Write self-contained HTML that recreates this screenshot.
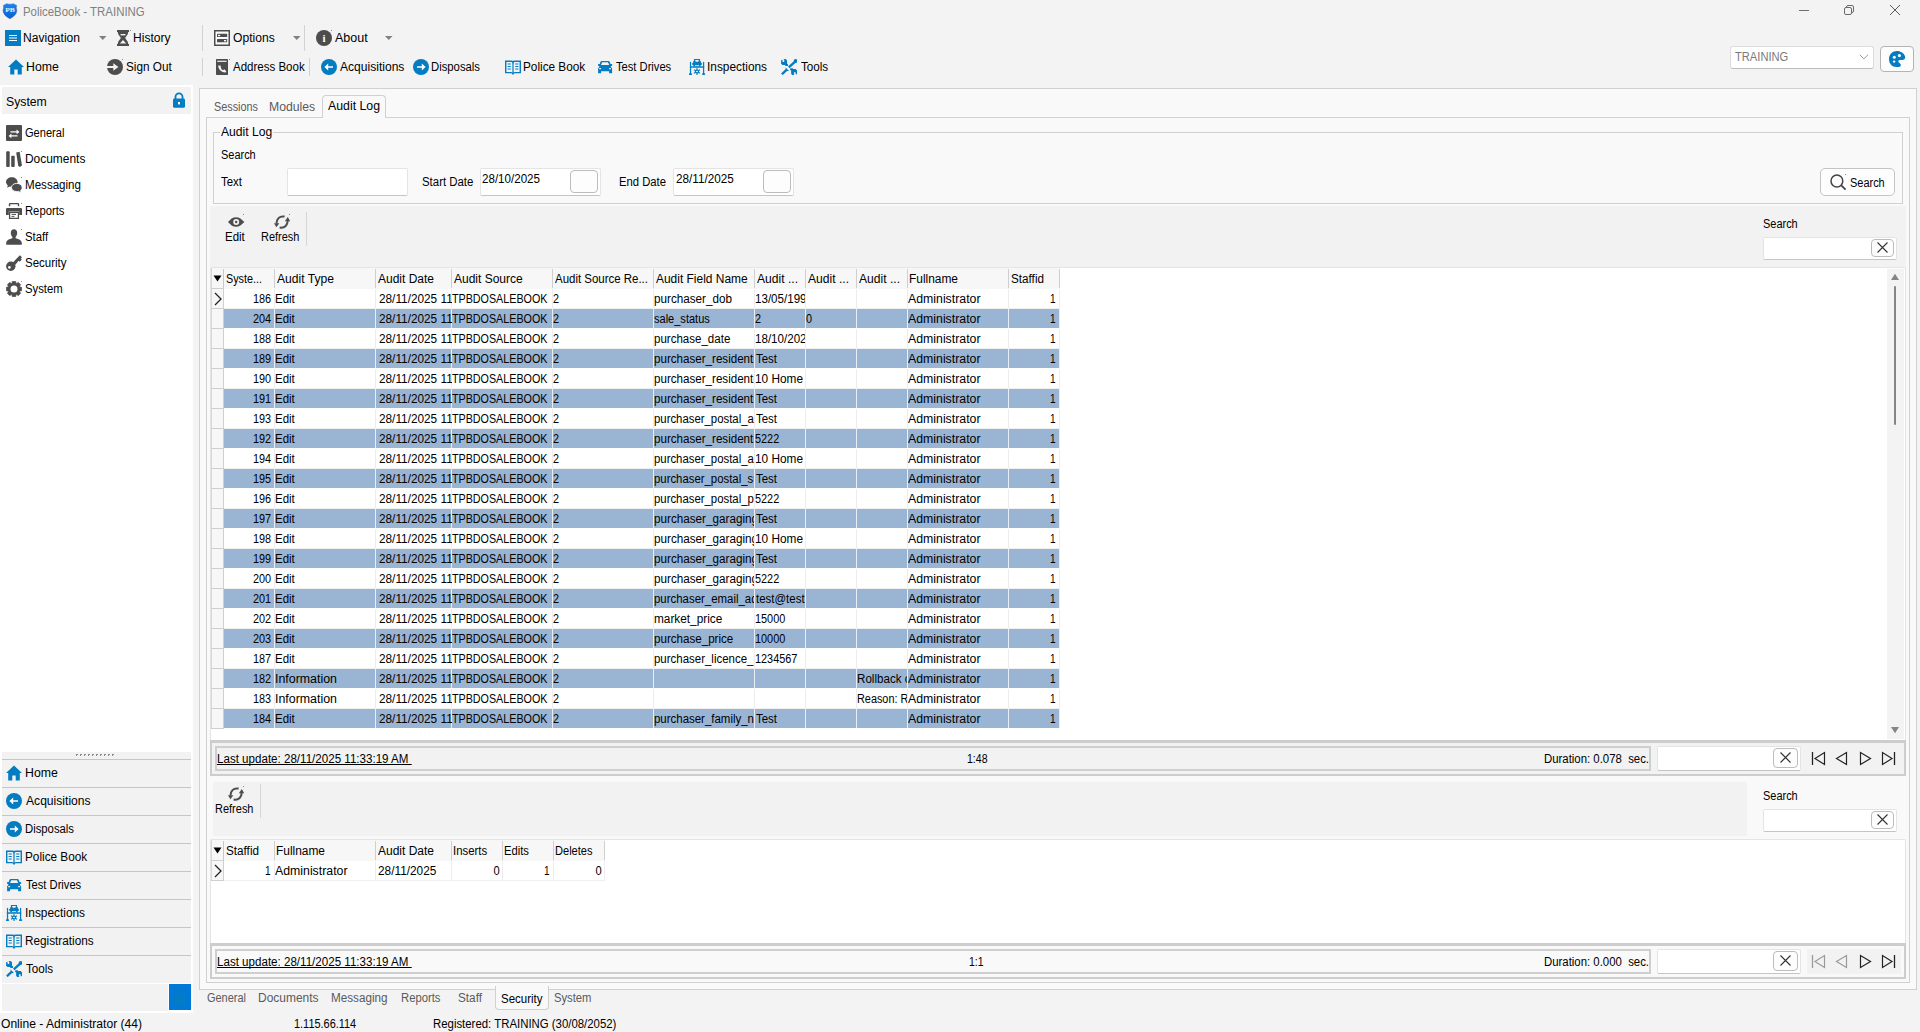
<!DOCTYPE html>
<html><head><meta charset="utf-8"><title>PoliceBook - TRAINING</title>
<style>
html,body{margin:0;padding:0;}
body{width:1920px;height:1032px;position:relative;overflow:hidden;background:#f3f3f3;font-family:'Liberation Sans', sans-serif;font-size:12px;}
div,span.t,svg{position:absolute;box-sizing:border-box;}
span.t{white-space:pre;line-height:16px;display:block;}
</style></head><body>
<span class="t" style="top:4.03px;font-size:12px;color:#808080;left:22.96px;transform-origin:0 0;transform:scaleX(0.9521);">PoliceBook - TRAINING</span>
<svg style="left:0px;top:0px" width="20" height="20" viewBox="0 0 20 20"><defs><linearGradient id="sg" x1="0" y1="0" x2="0" y2="1"><stop offset="0" stop-color="#1a86f0"/><stop offset="1" stop-color="#0a5fd0"/></linearGradient></defs><path d="M3.6 5.2Q5.2 5 6.3 3.8Q9.9 4.8 13.6 3.8Q14.8 5 16.5 5.2Q15.9 7.6 16.8 10.8Q16.4 15.6 9.8 18.8Q3.4 15.6 3 10.8Q3.9 7.6 3.6 5.2Z" fill="url(#sg)" stroke="#2a5ea8" stroke-width="0.5"/><text x="10" y="12.2" font-size="6.4" textLength="9.6" lengthAdjust="spacingAndGlyphs" font-weight="bold" fill="#e8f0ff" text-anchor="middle" font-family="Liberation Serif,serif">PB</text></svg>
<svg style="left:1799px;top:10px" width="10" height="1" viewBox="0 0 10 1"><rect width="10" height="1" fill="#6e6e6e"/></svg>
<svg style="left:1843px;top:4px" width="12" height="12" viewBox="0 0 12 12"><rect x="1.5" y="3.5" width="7" height="7" rx="1.5" fill="none" stroke="#6a6a6a" stroke-width="1"/><path d="M3.5 3.5 V3 A1.5 1.5 0 0 1 5 1.5 H9 A1.5 1.5 0 0 1 10.5 3 V7 A1.5 1.5 0 0 1 9 8.5 H8.5" fill="none" stroke="#6a6a6a" stroke-width="1"/></svg>
<svg style="left:1889px;top:4px" width="12" height="12" viewBox="0 0 12 12"><path d="M1 1 L11 11 M11 1 L1 11" stroke="#5a5a5a" stroke-width="1" fill="none"/></svg>
<svg style="left:5px;top:30px" width="16" height="16" viewBox="0 0 16 16"><rect width="16" height="16" fill="#047cc2"/><path d="M4 5.5H12M4 8H12M4 10.5H12" stroke="#fff" stroke-width="1.2"/></svg>
<span class="t" style="top:30.03px;font-size:12px;color:#000;left:23.41px;transform-origin:0 0;transform:scaleX(1.0052);">Navigation</span>
<svg style="left:98.7px;top:36px" width="8" height="4" viewBox="0 0 8 4"><path d="M0 0 H7.5 L3.75 4Z" fill="#808080"/></svg>
<svg style="left:117px;top:30px" width="12" height="16" viewBox="0 0 12 16"><path d="M0 0H12V2H11.2C11.2 5 8.8 6.4 8.2 8C8.8 9.6 11.2 11 11.2 14H12V16H0V14H0.8C0.8 11 3.2 9.6 3.8 8C3.2 6.4 0.8 5 0.8 2H0Z" fill="#4d4d4d"/><rect x="3.6" y="4" width="4.8" height="1.4" fill="#f3f3f3"/><path d="M6 10L9.2 13.6H2.8Z" fill="#f3f3f3"/></svg>
<span class="t" style="top:30.03px;font-size:12px;color:#000;left:133.41px;transform-origin:0 0;transform:scaleX(1.0042);">History</span>
<div style="left:202px;top:25px;width:1px;height:26px;background:#d2d2d2;"></div>
<svg style="left:214px;top:30px" width="16" height="16" viewBox="0 0 16 16"><rect x="0.75" y="0.75" width="14.5" height="14.5" fill="#fafafa" stroke="#4d4d4d" stroke-width="1.5"/><rect x="3" y="3.8" width="10.2" height="3.3" rx="0.6" fill="#4d4d4d"/><rect x="3" y="9" width="10.2" height="3.3" rx="0.6" fill="#4d4d4d"/><rect x="4" y="4.8" width="2.2" height="1.4" fill="#fafafa"/><rect x="10" y="10" width="2.2" height="1.4" fill="#fafafa"/></svg>
<span class="t" style="top:30.03px;font-size:12px;color:#000;left:232.73px;transform-origin:0 0;transform:scaleX(1.0082);">Options</span>
<svg style="left:292.5px;top:36px" width="8" height="4" viewBox="0 0 8 4"><path d="M0 0 H7.5 L3.75 4Z" fill="#808080"/></svg>
<div style="left:304px;top:25px;width:1px;height:26px;background:#d2d2d2;"></div>
<svg style="left:316px;top:30px" width="16" height="16" viewBox="0 0 16 16"><circle cx="8" cy="8" r="8" fill="#4d4d4d"/><text x="8" y="12" font-size="11" font-weight="bold" fill="#fff" text-anchor="middle" font-family="Liberation Serif,serif">i</text></svg>
<span class="t" style="top:30.03px;font-size:12px;color:#000;left:335.28px;transform-origin:0 0;transform:scaleX(1.0428);">About</span>
<svg style="left:385.3px;top:36px" width="8" height="4" viewBox="0 0 8 4"><path d="M0 0 H7.5 L3.75 4Z" fill="#808080"/></svg>
<svg style="left:8px;top:59px" width="16" height="16" viewBox="0 0 16 16"><path d="M8 0.5L0 8H2.2V15.5H6.3V10.5H9.7V15.5H13.8V8H16Z" fill="#047cc2"/></svg>
<span class="t" style="top:58.63px;font-size:12px;color:#000;left:26.19px;transform-origin:0 0;transform:scaleX(1.0245);">Home</span>
<svg style="left:107px;top:59px" width="16" height="16" viewBox="0 0 16 16"><circle cx="8" cy="8" r="8" fill="#4d4d4d"/><path d="M0 7H6.3V4.2L11.4 8L6.3 11.8V9H0Z" fill="#f3f3f3"/></svg>
<span class="t" style="top:58.63px;font-size:12px;color:#000;left:125.67px;transform-origin:0 0;transform:scaleX(0.9807);">Sign Out</span>
<div style="left:202px;top:58px;width:1px;height:18px;background:#d2d2d2;"></div>
<svg style="left:216px;top:59px" width="12" height="16" viewBox="0 0 12 16"><rect width="12" height="16" rx="0.8" fill="#4d4d4d"/><rect x="1.2" y="1.7" width="9.4" height="1.2" fill="#f3f3f3"/><path d="M2.2 6.4H4.6L5 9C5.4 10.2 6 10.8 7 11.2L8.4 10.2L10.4 12.6L9.6 13.4C6 13.6 2.2 10.4 2.2 6.4Z" fill="#f3f3f3"/></svg>
<span class="t" style="top:58.63px;font-size:12px;color:#000;left:233.28px;transform-origin:0 0;transform:scaleX(0.9596);">Address Book</span>
<div style="left:309px;top:58px;width:1px;height:18px;background:#d2d2d2;"></div>
<svg style="left:321px;top:59px" width="16" height="16" viewBox="0 0 16 16"><circle cx="8" cy="8" r="8" fill="#047cc2"/><path d="M12 7.2H7.2V4.6L3.4 8L7.2 11.4V8.8H12Z" fill="#fff"/></svg>
<span class="t" style="top:58.63px;font-size:12px;color:#000;left:340.28px;transform-origin:0 0;transform:scaleX(1.0058);">Acquisitions</span>
<svg style="left:413px;top:59px" width="16" height="16" viewBox="0 0 16 16"><circle cx="8" cy="8" r="8" fill="#047cc2"/><path d="M4 7.2H8.8V4.6L12.6 8L8.8 11.4V8.8H4Z" fill="#fff"/></svg>
<span class="t" style="top:58.63px;font-size:12px;color:#000;left:431.07px;transform-origin:0 0;transform:scaleX(0.9417);">Disposals</span>
<svg style="left:504.6px;top:59.5px" width="16" height="15" viewBox="0 0 16 15"><path d="M0.7 1.2H6.2Q7.6 1.2 8 2.2Q8.4 1.2 9.8 1.2H15.3V12.6H9.8Q8.6 12.6 8 13.8Q7.4 12.6 6.2 12.6H0.7Z" fill="none" stroke="#047cc2" stroke-width="1.45"/><path d="M8 2.2V13.5" stroke="#047cc2" stroke-width="1.2"/><path d="M2.6 4H5.8M2.6 6.5H5.8M2.6 9H5.8M10.2 4H13.4M10.2 6.5H13.4M10.2 9H13.4" stroke="#047cc2" stroke-width="1.2"/></svg>
<span class="t" style="top:58.63px;font-size:12px;color:#000;left:523.03px;transform-origin:0 0;transform:scaleX(0.9815);">Police Book</span>
<svg style="left:598px;top:61px" width="15" height="13" viewBox="0 0 15 13"><path d="M3.4 0H10.8Q11.3 0 11.5 0.6L11.8 1.2Q12.3 1.4 12.3 2V3.1H13.6Q14.3 3.1 14.3 4Q14.3 5 13.4 5H13L12.9 6.2Q14.1 6.4 14.1 7.4V12.2H11.1V10.3H3.1V12.2H0.1V7.4Q0.1 6.4 1.3 6.2L1.2 5H0.8Q-0.1 5 -0.1 4Q-0.1 3.1 0.6 3.1H1.9V2Q1.9 1.4 2.4 1.2L2.7 0.6Q2.9 0 3.4 0Z" fill="#047cc2"/><path d="M4.2 1.3H10L11.2 4H3Z" fill="#f3f3f3"/><rect x="1.1" y="7.05" width="2.05" height="1.25" rx="0.5" fill="#f3f3f3"/><rect x="11.05" y="7.05" width="2" height="1.25" rx="0.5" fill="#f3f3f3"/></svg>
<span class="t" style="top:58.63px;font-size:12px;color:#000;left:616.25px;transform-origin:0 0;transform:scaleX(0.9302);">Test Drives</span>
<svg style="left:689px;top:59px" width="17" height="17" viewBox="0 0 17 17"><g fill="#047cc2"><rect x="0.9" y="2.8" width="1.25" height="12.4" rx="0.6"/><rect x="13.95" y="2.8" width="1.25" height="12.4" rx="0.6"/><rect x="-0.1" y="14.2" width="3.2" height="1.8" rx="0.8"/><rect x="13" y="14.2" width="3.2" height="1.8" rx="0.8"/><rect x="0.9" y="7.3" width="14.3" height="1.45"/><path d="M5.4 -0.1H10.6Q11.1 -0.1 11.1 0.5V2.1Q12 2.2 12 3V3.8Q13 3.9 13 4.9Q13 6 12 6H11.7V7.4H4.3V6H4Q3.1 6 3.1 4.9Q3.1 3.9 4.1 3.8V3Q4.1 2.2 4.9 2.1V0.5Q4.9 -0.1 5.4 -0.1Z"/><circle cx="8" cy="12.5" r="2.1"/></g><path d="M9.30 13.25L10.60 14.00M8.00 14.00L8.00 15.50M6.70 13.25L5.40 14.00M6.70 11.75L5.40 11.00M8.00 11.00L8.00 9.50M9.30 11.75L10.60 11.00" stroke="#047cc2" stroke-width="1.2" stroke-linecap="round"/><path d="M6 1H10L9.2 2.8H6.8Z" fill="#f3f3f3"/><rect x="6" y="6.1" width="4.1" height="0.75" fill="#f3f3f3"/><ellipse cx="8" cy="12.5" rx="1" ry="0.65" fill="#f3f3f3"/></svg>
<span class="t" style="top:58.63px;font-size:12px;color:#000;left:706.91px;transform-origin:0 0;transform:scaleX(0.9884);">Inspections</span>
<svg style="left:781px;top:59px" width="16" height="16" viewBox="0 0 16 16"><path d="M0.1 1.3L1.4 0.8L1.7 2.9L3.2 2.9L3.3 0.7L2.2 0.1L4.6 0L6 1.2L6.1 4.7L7.2 5.4L6.9 7L4.5 6.9L4 6.1L1.5 6.1L0.1 4.7Z" fill="#047cc2"/><path d="M16.1 14.9L14.8 15.4L14.5 13.3L13.0 13.3L12.9 15.5L14.0 16.1L11.6 16.2L10.2 15.0L10.1 11.5L9.0 10.8L9.3 9.2L11.7 9.3L12.2 10.1L14.7 10.1L16.1 11.5Z" fill="#047cc2"/><path d="M15.2 1.6L7.8 8.4" stroke="#047cc2" stroke-width="2.3"/><circle cx="14.6" cy="2" r="1.9" fill="#047cc2"/><path d="M4.3 8.2L8 11.9L5.4 12.1Z" fill="#047cc2"/><path d="M5.8 10.6L0.9 15.3" stroke="#047cc2" stroke-width="2.3"/></svg>
<span class="t" style="top:58.63px;font-size:12px;color:#000;left:800.54px;transform-origin:0 0;transform:scaleX(0.9709);">Tools</span>
<div style="left:1730px;top:46px;width:144px;height:23px;background:#fff;border:1px solid #dcdcdc;border-radius:3px;border-bottom-color:#bdbdbd;"></div>
<span class="t" style="top:48.73px;font-size:12px;color:#7a7a7a;left:1735.25px;transform-origin:0 0;transform:scaleX(0.9295);">TRAINING</span>
<svg style="left:1859px;top:54px" width="10" height="6" viewBox="0 0 10 6"><path d="M0.8 0.8L4.9 4.9L9 0.8" fill="none" stroke="#9a9a9a" stroke-width="1"/></svg>
<div style="left:1880px;top:46px;width:34px;height:26px;background:#fdfdfd;border:1px solid #b4b4b4;border-radius:4px;"></div>
<svg style="left:1889px;top:51px" width="17" height="16" viewBox="0 0 17 16"><path d="M8 0C12 0 15 2.4 16.1 5.4C16.7 7.4 15.2 9 13.2 9H11C9.5 9 8.8 10.3 9.7 11.3L11.5 13.1C12.4 14.2 11.6 16 10 16H7.6C3 16 0 12.5 0 8C0 3.5 3.5 0 8 0Z" fill="#047cc2"/><circle cx="5.3" cy="6.3" r="1.5" fill="#fff"/><circle cx="10.4" cy="4.6" r="1.6" fill="#fff"/><circle cx="5.1" cy="10.6" r="1.2" fill="#fff"/></svg>
<div style="left:0px;top:85px;width:193px;height:928px;background:#fff;"></div>
<div style="left:2px;top:87px;width:189px;height:27px;background:#f2f2f2;"></div>
<span class="t" style="top:93.70px;font-size:13px;color:#000;left:5.64px;transform-origin:0 0;transform:scaleX(0.9413);">System</span>
<svg style="left:173px;top:92px" width="12" height="16" viewBox="0 0 12 16"><path d="M2.5 7V4.8A3.5 3.5 0 0 1 9.5 4.8V7" fill="none" stroke="#047cc2" stroke-width="1.8"/><rect x="0" y="6.6" width="12" height="9.2" rx="1.4" fill="#047cc2"/><rect x="5" y="10" width="2" height="2.4" fill="#fff"/></svg>
<svg style="left:6px;top:125px" width="16" height="16" viewBox="0 0 16 16"><rect width="16" height="16" rx="1" fill="#4d4d4d"/><path d="M4.5 6.2H10.6V4.4L13.4 6.9L10.6 9.2V7.6H4.5Z M11.5 10.2H5.4V8.6L2.6 11L5.4 13.2V11.6H11.5Z" fill="#fff"/></svg>
<span class="t" style="top:124.93px;font-size:12px;color:#000;left:25.04px;transform-origin:0 0;transform:scaleX(0.9226);">General</span>
<svg style="left:6px;top:151px" width="16" height="16" viewBox="0 0 16 16"><rect x="0.2" y="0.3" width="3.5" height="15.6" rx="0.9" fill="#4d4d4d"/><rect x="5.2" y="4.8" width="3.5" height="11.1" rx="0.9" fill="#4d4d4d"/><path d="M10.2 1.6L13.6 0.8L16 14.6L13.6 16L12.2 14.8Z" fill="#4d4d4d"/></svg>
<span class="t" style="top:150.93px;font-size:12px;color:#000;left:24.62px;transform-origin:0 0;transform:scaleX(0.9950);">Documents</span>
<svg style="left:6px;top:177px" width="16" height="16" viewBox="0 0 16 16"><path d="M5.8 0.2C9 0.2 11.6 2.3 11.6 5S9 9.8 5.8 9.8C5 9.8 4.4 9.7 3.7 9.5L1 10.8L1.9 8.4C0.8 7.5 0 6.3 0 5C0 2.3 2.6 0.2 5.8 0.2Z" fill="#4d4d4d"/><path d="M10.8 6.4C13.8 6.4 16.2 8.2 16.2 10.5C16.2 11.7 15.6 12.7 14.6 13.5L15.2 16L12.6 14.4C12 14.6 11.4 14.6 10.8 14.6C7.8 14.6 5.4 12.8 5.4 10.5S7.8 6.4 10.8 6.4Z" fill="#4d4d4d" stroke="#fff" stroke-width="0.9"/></svg>
<span class="t" style="top:176.93px;font-size:12px;color:#000;left:24.65px;transform-origin:0 0;transform:scaleX(0.9650);">Messaging</span>
<svg style="left:6px;top:203px" width="16" height="16" viewBox="0 0 16 16"><path d="M3.5 3.2V1.5A1 1 0 0 1 4.5 0.5H11.5A1 1 0 0 1 12.5 1.5V3.2" fill="none" stroke="#4d4d4d" stroke-width="1.4"/><path d="M1.2 5H14.8A1.2 1.2 0 0 1 16 6.2V12H13.2V8.6H2.8V12H0V6.2A1.2 1.2 0 0 1 1.2 5Z" fill="#4d4d4d"/><rect x="3.6" y="9.4" width="8.8" height="6" fill="none" stroke="#4d4d4d" stroke-width="1.3"/><path d="M5.6 11.4H10M5.6 13.4H8.4" stroke="#4d4d4d" stroke-width="1"/></svg>
<span class="t" style="top:202.93px;font-size:12px;color:#000;left:24.68px;transform-origin:0 0;transform:scaleX(0.9374);">Reports</span>
<svg style="left:6px;top:229px" width="16" height="16" viewBox="0 0 16 16"><path d="M8 0.3C10 0.3 11.2 1.8 11.2 4C11.2 5.8 10.4 7.2 9.6 8V9.2C12.5 10 15.8 11 15.8 14V15.7H0.2V14C0.2 11 3.5 10 6.4 9.2V8C5.6 7.2 4.8 5.8 4.8 4C4.8 1.8 6 0.3 8 0.3Z" fill="#4d4d4d"/></svg>
<span class="t" style="top:228.93px;font-size:12px;color:#000;left:25.08px;transform-origin:0 0;transform:scaleX(0.9481);">Staff</span>
<svg style="left:6px;top:255px" width="16" height="16" viewBox="0 0 16 16"><circle cx="4.8" cy="11.2" r="4.7" fill="#4d4d4d"/><circle cx="3.4" cy="12.4" r="1.3" fill="#fff"/><path d="M6.2 8.2L13.8 0.2L16 2.2L14.8 3.6L15.8 4.6L13.8 6.8L12.6 5.8L9.4 9.8Z" fill="#4d4d4d"/></svg>
<span class="t" style="top:254.93px;font-size:12px;color:#000;left:25.08px;transform-origin:0 0;transform:scaleX(0.9571);">Security</span>
<svg style="left:6px;top:281px" width="16" height="16" viewBox="0 0 16 16"><path d="M6.34 0.28L9.66 0.28L9.95 2.01L10.86 2.39L12.29 1.36L14.64 3.71L13.61 5.14L13.99 6.05L15.72 6.34L15.72 9.66L13.99 9.95L13.61 10.86L14.64 12.29L12.29 14.64L10.86 13.61L9.95 13.99L9.66 15.72L6.34 15.72L6.05 13.99L5.14 13.61L3.71 14.64L1.36 12.29L2.39 10.86L2.01 9.95L0.28 9.66L0.28 6.34L2.01 6.05L2.39 5.14L1.36 3.71L3.71 1.36L5.14 2.39L6.05 2.01Z" fill="#4d4d4d" stroke="#4d4d4d" stroke-width="0.6" stroke-linejoin="round"/><circle cx="8" cy="8" r="3.5" fill="#fff"/></svg>
<span class="t" style="top:280.93px;font-size:12px;color:#000;left:25.09px;transform-origin:0 0;transform:scaleX(0.9421);">System</span>
<div style="left:2px;top:752px;width:189px;height:231px;background:#f2f2f2;"></div>
<div style="left:76px;top:754px;width:2px;height:1px;background:#8a8a8a;"></div>
<div style="left:76px;top:755px;width:1px;height:1px;background:#8a8a8a;"></div>
<div style="left:80px;top:754px;width:2px;height:1px;background:#8a8a8a;"></div>
<div style="left:80px;top:755px;width:1px;height:1px;background:#8a8a8a;"></div>
<div style="left:84px;top:754px;width:2px;height:1px;background:#8a8a8a;"></div>
<div style="left:84px;top:755px;width:1px;height:1px;background:#8a8a8a;"></div>
<div style="left:88px;top:754px;width:2px;height:1px;background:#8a8a8a;"></div>
<div style="left:88px;top:755px;width:1px;height:1px;background:#8a8a8a;"></div>
<div style="left:92px;top:754px;width:2px;height:1px;background:#8a8a8a;"></div>
<div style="left:92px;top:755px;width:1px;height:1px;background:#8a8a8a;"></div>
<div style="left:96px;top:754px;width:2px;height:1px;background:#8a8a8a;"></div>
<div style="left:96px;top:755px;width:1px;height:1px;background:#8a8a8a;"></div>
<div style="left:100px;top:754px;width:2px;height:1px;background:#8a8a8a;"></div>
<div style="left:100px;top:755px;width:1px;height:1px;background:#8a8a8a;"></div>
<div style="left:104px;top:754px;width:2px;height:1px;background:#8a8a8a;"></div>
<div style="left:104px;top:755px;width:1px;height:1px;background:#8a8a8a;"></div>
<div style="left:108px;top:754px;width:2px;height:1px;background:#8a8a8a;"></div>
<div style="left:108px;top:755px;width:1px;height:1px;background:#8a8a8a;"></div>
<div style="left:112px;top:754px;width:2px;height:1px;background:#8a8a8a;"></div>
<div style="left:112px;top:755px;width:1px;height:1px;background:#8a8a8a;"></div>
<div style="left:2px;top:759px;width:189px;height:1px;background:#c6c6c6;"></div>
<svg style="left:6px;top:765px" width="16" height="16" viewBox="0 0 16 16"><path d="M8 0.5L0 8H2.2V15.5H6.3V10.5H9.7V15.5H13.8V8H16Z" fill="#047cc2"/></svg>
<span class="t" style="top:764.53px;font-size:12px;color:#000;left:25.19px;transform-origin:0 0;transform:scaleX(1.0245);">Home</span>
<div style="left:2px;top:787px;width:189px;height:1px;background:#c6c6c6;"></div>
<svg style="left:6px;top:793px" width="16" height="16" viewBox="0 0 16 16"><circle cx="8" cy="8" r="8" fill="#047cc2"/><path d="M12 7.2H7.2V4.6L3.4 8L7.2 11.4V8.8H12Z" fill="#fff"/></svg>
<span class="t" style="top:792.53px;font-size:12px;color:#000;left:26.18px;transform-origin:0 0;transform:scaleX(1.0089);">Acquisitions</span>
<div style="left:2px;top:815px;width:189px;height:1px;background:#c6c6c6;"></div>
<svg style="left:6px;top:821px" width="16" height="16" viewBox="0 0 16 16"><circle cx="8" cy="8" r="8" fill="#047cc2"/><path d="M4 7.2H8.8V4.6L12.6 8L8.8 11.4V8.8H4Z" fill="#fff"/></svg>
<span class="t" style="top:820.53px;font-size:12px;color:#000;left:25.27px;transform-origin:0 0;transform:scaleX(0.9417);">Disposals</span>
<div style="left:2px;top:843px;width:189px;height:1px;background:#c6c6c6;"></div>
<svg style="left:6px;top:850px" width="16" height="15" viewBox="0 0 16 15"><path d="M0.7 1.2H6.2Q7.6 1.2 8 2.2Q8.4 1.2 9.8 1.2H15.3V12.6H9.8Q8.6 12.6 8 13.8Q7.4 12.6 6.2 12.6H0.7Z" fill="none" stroke="#047cc2" stroke-width="1.45"/><path d="M8 2.2V13.5" stroke="#047cc2" stroke-width="1.2"/><path d="M2.6 4H5.8M2.6 6.5H5.8M2.6 9H5.8M10.2 4H13.4M10.2 6.5H13.4M10.2 9H13.4" stroke="#047cc2" stroke-width="1.2"/></svg>
<span class="t" style="top:848.53px;font-size:12px;color:#000;left:25.23px;transform-origin:0 0;transform:scaleX(0.9815);">Police Book</span>
<div style="left:2px;top:871px;width:189px;height:1px;background:#c6c6c6;"></div>
<svg style="left:7px;top:879px" width="15" height="13" viewBox="0 0 15 13"><path d="M3.4 0H10.8Q11.3 0 11.5 0.6L11.8 1.2Q12.3 1.4 12.3 2V3.1H13.6Q14.3 3.1 14.3 4Q14.3 5 13.4 5H13L12.9 6.2Q14.1 6.4 14.1 7.4V12.2H11.1V10.3H3.1V12.2H0.1V7.4Q0.1 6.4 1.3 6.2L1.2 5H0.8Q-0.1 5 -0.1 4Q-0.1 3.1 0.6 3.1H1.9V2Q1.9 1.4 2.4 1.2L2.7 0.6Q2.9 0 3.4 0Z" fill="#047cc2"/><path d="M4.2 1.3H10L11.2 4H3Z" fill="#f3f3f3"/><rect x="1.1" y="7.05" width="2.05" height="1.25" rx="0.5" fill="#f3f3f3"/><rect x="11.05" y="7.05" width="2" height="1.25" rx="0.5" fill="#f3f3f3"/></svg>
<span class="t" style="top:876.53px;font-size:12px;color:#000;left:25.95px;transform-origin:0 0;transform:scaleX(0.9302);">Test Drives</span>
<div style="left:2px;top:899px;width:189px;height:1px;background:#c6c6c6;"></div>
<svg style="left:6px;top:905px" width="17" height="17" viewBox="0 0 17 17"><g fill="#047cc2"><rect x="0.9" y="2.8" width="1.25" height="12.4" rx="0.6"/><rect x="13.95" y="2.8" width="1.25" height="12.4" rx="0.6"/><rect x="-0.1" y="14.2" width="3.2" height="1.8" rx="0.8"/><rect x="13" y="14.2" width="3.2" height="1.8" rx="0.8"/><rect x="0.9" y="7.3" width="14.3" height="1.45"/><path d="M5.4 -0.1H10.6Q11.1 -0.1 11.1 0.5V2.1Q12 2.2 12 3V3.8Q13 3.9 13 4.9Q13 6 12 6H11.7V7.4H4.3V6H4Q3.1 6 3.1 4.9Q3.1 3.9 4.1 3.8V3Q4.1 2.2 4.9 2.1V0.5Q4.9 -0.1 5.4 -0.1Z"/><circle cx="8" cy="12.5" r="2.1"/></g><path d="M9.30 13.25L10.60 14.00M8.00 14.00L8.00 15.50M6.70 13.25L5.40 14.00M6.70 11.75L5.40 11.00M8.00 11.00L8.00 9.50M9.30 11.75L10.60 11.00" stroke="#047cc2" stroke-width="1.2" stroke-linecap="round"/><path d="M6 1H10L9.2 2.8H6.8Z" fill="#f3f3f3"/><rect x="6" y="6.1" width="4.1" height="0.75" fill="#f3f3f3"/><ellipse cx="8" cy="12.5" rx="1" ry="0.65" fill="#f3f3f3"/></svg>
<span class="t" style="top:904.53px;font-size:12px;color:#000;left:25.11px;transform-origin:0 0;transform:scaleX(0.9884);">Inspections</span>
<div style="left:2px;top:927px;width:189px;height:1px;background:#c6c6c6;"></div>
<svg style="left:6px;top:934px" width="16" height="15" viewBox="0 0 16 15"><path d="M0.7 1.2H6.2Q7.6 1.2 8 2.2Q8.4 1.2 9.8 1.2H15.3V12.6H9.8Q8.6 12.6 8 13.8Q7.4 12.6 6.2 12.6H0.7Z" fill="none" stroke="#047cc2" stroke-width="1.45"/><path d="M8 2.2V13.5" stroke="#047cc2" stroke-width="1.2"/><path d="M2.6 4H5.8M2.6 6.5H5.8M2.6 9H5.8M10.2 4H13.4M10.2 6.5H13.4M10.2 9H13.4" stroke="#047cc2" stroke-width="1.2"/></svg>
<span class="t" style="top:932.53px;font-size:12px;color:#000;left:25.24px;transform-origin:0 0;transform:scaleX(0.9796);">Registrations</span>
<div style="left:2px;top:955px;width:189px;height:1px;background:#c6c6c6;"></div>
<svg style="left:6px;top:961px" width="16" height="16" viewBox="0 0 16 16"><path d="M0.1 1.3L1.4 0.8L1.7 2.9L3.2 2.9L3.3 0.7L2.2 0.1L4.6 0L6 1.2L6.1 4.7L7.2 5.4L6.9 7L4.5 6.9L4 6.1L1.5 6.1L0.1 4.7Z" fill="#047cc2"/><path d="M16.1 14.9L14.8 15.4L14.5 13.3L13.0 13.3L12.9 15.5L14.0 16.1L11.6 16.2L10.2 15.0L10.1 11.5L9.0 10.8L9.3 9.2L11.7 9.3L12.2 10.1L14.7 10.1L16.1 11.5Z" fill="#047cc2"/><path d="M15.2 1.6L7.8 8.4" stroke="#047cc2" stroke-width="2.3"/><circle cx="14.6" cy="2" r="1.9" fill="#047cc2"/><path d="M4.3 8.2L8 11.9L5.4 12.1Z" fill="#047cc2"/><path d="M5.8 10.6L0.9 15.3" stroke="#047cc2" stroke-width="2.3"/></svg>
<span class="t" style="top:960.53px;font-size:12px;color:#000;left:25.94px;transform-origin:0 0;transform:scaleX(0.9709);">Tools</span>
<div style="left:2px;top:984px;width:166px;height:27px;background:#f2f2f2;"></div>
<div style="left:169px;top:984px;width:22px;height:26px;background:#0078d7;"></div>
<svg style="left:174px;top:989px" width="12" height="16" viewBox="0 0 12 16"><path d="M2.5 7V4.8A3.5 3.5 0 0 1 9.5 4.8V7" fill="none" stroke="#047cc2" stroke-width="1.8"/><rect x="0" y="6.6" width="12" height="9.2" rx="1.4" fill="#047cc2"/><rect x="5" y="10" width="2" height="2.2" fill="#0078d7"/></svg>
<div style="left:199px;top:88px;width:1718px;height:902px;background:#f9f9f9;border:1px solid #d0d0d0;"></div>
<span class="t" style="top:98.63px;font-size:12px;color:#5a5a5a;left:213.51px;transform-origin:0 0;transform:scaleX(0.9034);">Sessions</span>
<span class="t" style="top:98.63px;font-size:12px;color:#5a5a5a;left:269.00px;transform-origin:0 0;transform:scaleX(1.0185);">Modules</span>
<div style="left:206px;top:117px;width:1704px;height:866px;background:#f9f9f9;border:1px solid #d0d0d0;"></div>
<div style="left:322px;top:95px;width:64px;height:23px;background:#f9f9f9;border:1px solid #d0d0d0;border-bottom:none;border-radius:4px 4px 0 0;"></div>
<span class="t" style="top:98.03px;font-size:12px;color:#000;left:327.98px;transform-origin:0 0;transform:scaleX(1.0253);">Audit Log</span>
<div style="left:213px;top:132px;width:1690px;height:72px;border:1px solid #d0d0d0;"></div>
<div style="left:220px;top:127px;width:53px;height:10px;background:#f9f9f9;"></div>
<span class="t" style="top:123.63px;font-size:12px;color:#000;left:221.18px;transform-origin:0 0;transform:scaleX(1.0115);">Audit Log</span>
<span class="t" style="top:146.78px;font-size:12px;color:#000;left:220.50px;transform-origin:0 0;transform:scaleX(0.9124);">Search</span>
<span class="t" style="top:174.03px;font-size:12px;color:#000;left:220.74px;transform-origin:0 0;transform:scaleX(0.9539);">Text</span>
<div style="left:287px;top:168px;width:121px;height:28px;background:#fff;border:1px solid #e4e4e4;border-radius:2px;border-bottom-color:#c4c4c4;"></div>
<span class="t" style="top:174.03px;font-size:12px;color:#000;left:422.48px;transform-origin:0 0;transform:scaleX(0.9513);">Start Date</span>
<div style="left:480px;top:168px;width:121px;height:28px;background:#fff;border:1px solid #e4e4e4;border-radius:2px;border-bottom-color:#c4c4c4;"></div>
<span class="t" style="top:170.93px;font-size:12px;color:#000;left:482.42px;transform-origin:0 0;transform:scaleX(0.9657);">28/10/2025</span>
<div style="left:570px;top:170px;width:28px;height:23px;background:#fdfdfd;border:1px solid #bcbcbc;border-radius:4px;"></div>
<span class="t" style="top:174.03px;font-size:12px;color:#000;left:619.28px;transform-origin:0 0;transform:scaleX(0.9391);">End Date</span>
<div style="left:673px;top:168px;width:121px;height:28px;background:#fff;border:1px solid #e4e4e4;border-radius:2px;border-bottom-color:#c4c4c4;"></div>
<span class="t" style="top:170.93px;font-size:12px;color:#000;left:675.61px;transform-origin:0 0;transform:scaleX(0.9768);">28/11/2025</span>
<div style="left:763px;top:170px;width:28px;height:23px;background:#fdfdfd;border:1px solid #bcbcbc;border-radius:4px;"></div>
<div style="left:1820px;top:168px;width:75px;height:28px;background:#fdfdfd;border:1px solid #c4c4c4;border-radius:5px;"></div>
<svg style="left:1829px;top:173px" width="18" height="18" viewBox="0 0 18 18"><circle cx="7.9" cy="8" r="5.9" fill="none" stroke="#444" stroke-width="1.5"/><path d="M12.2 12.3L16.6 16.7" stroke="#444" stroke-width="1.8"/></svg>
<span class="t" style="top:175.03px;font-size:12px;color:#000;left:1849.50px;transform-origin:0 0;transform:scaleX(0.9124);">Search</span>
<div style="left:210px;top:206px;width:1696px;height:62px;background:#f2f2f2;"></div>
<svg style="left:227.7px;top:217px" width="17" height="10" viewBox="0 0 17 10"><path d="M0 5L3.6 1.4Q8 -1 12.4 1.4L16.4 5L12.4 8.6Q8 11 3.6 8.6Z" fill="#4d4d4d"/><circle cx="8.2" cy="5" r="3" fill="#f2f2f2"/><circle cx="8.2" cy="5" r="1.2" fill="#4d4d4d"/></svg>
<span class="t" style="top:228.63px;font-size:12px;color:#000;left:225.26px;transform-origin:0 0;transform:scaleX(0.9571);">Edit</span>
<svg style="left:274px;top:214.8px" width="17" height="14" viewBox="0 0 17 14"><path d="M10.6 1.6C5.2 0.6 2.4 4.4 2.6 8.6" fill="none" stroke="#4d4d4d" stroke-width="2"/><path d="M0 8.2H5.4L2.4 12.2Z" fill="#4d4d4d"/><path d="M5.6 12.6C11 13.6 13.8 9.8 13.6 5.6" fill="none" stroke="#4d4d4d" stroke-width="2"/><path d="M10.8 6.2H16.2L13.8 2Z" fill="#4d4d4d"/></svg>
<span class="t" style="top:228.63px;font-size:12px;color:#000;left:261.30px;transform-origin:0 0;transform:scaleX(0.9136);">Refresh</span>
<div style="left:306px;top:212px;width:1px;height:34px;background:#d6d6d6;"></div>
<span class="t" style="top:215.78px;font-size:12px;color:#000;left:1762.50px;transform-origin:0 0;transform:scaleX(0.9124);">Search</span>
<div style="left:1763px;top:237px;width:134px;height:23px;background:#fff;border:1px solid #e4e4e4;border-radius:2px;border-bottom-color:#c4c4c4;"></div>
<div style="left:1871px;top:239px;width:23px;height:18px;background:#fdfdfd;border:1px solid #bcbcbc;border-radius:4px;"></div>
<svg style="left:1877.2px;top:242px" width="11" height="11" viewBox="0 0 11 11"><path d="M0.5 0.5L10.5 10.5M10.5 0.5L0.5 10.5" stroke="#333" stroke-width="1.1" fill="none"/></svg>
<div style="left:210px;top:267px;width:1696px;height:473px;background:#fff;border:1px solid #e4e4e4;border-bottom:none;border-radius:2px 2px 0 0;"></div>
<div style="left:211px;top:268px;width:849px;height:21px;background:#f7f7f7;"></div>
<div style="left:211px;top:268px;width:13px;height:461px;background:#f7f7f7;"></div>
<div style="left:211px;top:268px;width:1px;height:461px;background:#d8d8d8;"></div>
<svg style="left:213px;top:275px" width="9" height="7" viewBox="0 0 9 7"><path d="M0.5 0.5H8.5L4.5 6.5Z" fill="#000"/></svg>
<div style="left:223px;top:269px;width:1px;height:19px;background:#c8c8c8;"></div>
<div style="left:211px;top:288px;width:13px;height:1px;background:#cfcfcf;"></div>
<span class="t" style="top:270.78px;font-size:12px;color:#000;left:225.71px;transform-origin:0 0;transform:scaleX(0.8996);">Syste...</span>
<div style="left:274px;top:269px;width:1px;height:19px;background:#cfcfcf;"></div>
<span class="t" style="top:270.78px;font-size:12px;color:#000;left:277.18px;transform-origin:0 0;transform:scaleX(1.0091);">Audit Type</span>
<div style="left:375px;top:269px;width:1px;height:19px;background:#cfcfcf;"></div>
<span class="t" style="top:270.78px;font-size:12px;color:#000;left:378.18px;transform-origin:0 0;transform:scaleX(0.9992);">Audit Date</span>
<div style="left:451px;top:269px;width:1px;height:19px;background:#cfcfcf;"></div>
<span class="t" style="top:270.78px;font-size:12px;color:#000;left:454.18px;transform-origin:0 0;transform:scaleX(0.9997);">Audit Source</span>
<div style="left:552px;top:269px;width:1px;height:19px;background:#cfcfcf;"></div>
<span class="t" style="top:270.78px;font-size:12px;color:#000;left:555.18px;transform-origin:0 0;transform:scaleX(0.9549);">Audit Source Re...</span>
<div style="left:653px;top:269px;width:1px;height:19px;background:#cfcfcf;"></div>
<span class="t" style="top:270.78px;font-size:12px;color:#000;left:656.18px;transform-origin:0 0;transform:scaleX(0.9962);">Audit Field Name</span>
<div style="left:754px;top:269px;width:1px;height:19px;background:#cfcfcf;"></div>
<span class="t" style="top:270.78px;font-size:12px;color:#000;left:757.18px;transform-origin:0 0;transform:scaleX(1.0077);">Audit ...</span>
<div style="left:805px;top:269px;width:1px;height:19px;background:#cfcfcf;"></div>
<span class="t" style="top:270.78px;font-size:12px;color:#000;left:808.18px;transform-origin:0 0;transform:scaleX(1.0077);">Audit ...</span>
<div style="left:856px;top:269px;width:1px;height:19px;background:#cfcfcf;"></div>
<span class="t" style="top:270.78px;font-size:12px;color:#000;left:859.18px;transform-origin:0 0;transform:scaleX(1.0077);">Audit ...</span>
<div style="left:907px;top:269px;width:1px;height:19px;background:#cfcfcf;"></div>
<span class="t" style="top:270.78px;font-size:12px;color:#000;left:909.22px;transform-origin:0 0;transform:scaleX(0.9927);">Fullname</span>
<div style="left:1008px;top:269px;width:1px;height:19px;background:#cfcfcf;"></div>
<span class="t" style="top:270.78px;font-size:12px;color:#000;left:1010.67px;transform-origin:0 0;transform:scaleX(0.9760);">Staffid</span>
<div style="left:1059px;top:269px;width:1px;height:19px;background:#cfcfcf;"></div>
<div style="left:274px;top:289px;width:1px;height:19px;background:#ededed;"></div>
<div style="left:375px;top:289px;width:1px;height:19px;background:#ededed;"></div>
<div style="left:451px;top:289px;width:1px;height:19px;background:#ededed;"></div>
<div style="left:552px;top:289px;width:1px;height:19px;background:#ededed;"></div>
<div style="left:653px;top:289px;width:1px;height:19px;background:#ededed;"></div>
<div style="left:754px;top:289px;width:1px;height:19px;background:#ededed;"></div>
<div style="left:805px;top:289px;width:1px;height:19px;background:#ededed;"></div>
<div style="left:856px;top:289px;width:1px;height:19px;background:#ededed;"></div>
<div style="left:907px;top:289px;width:1px;height:19px;background:#ededed;"></div>
<div style="left:1008px;top:289px;width:1px;height:19px;background:#ededed;"></div>
<div style="left:1059px;top:289px;width:1px;height:19px;background:#ededed;"></div>
<div style="left:224px;top:308px;width:836px;height:1px;background:#efefef;"></div>
<div style="left:211px;top:308px;width:13px;height:1px;background:#cfcfcf;"></div>
<div style="left:223px;top:289px;width:1px;height:20px;background:#cfcfcf;"></div>
<span class="t" style="top:290.78px;font-size:12px;color:#000;right:1648.72px;transform-origin:100% 0;transform:scaleX(0.9061);">186</span>
<span class="t" style="top:290.78px;font-size:12px;color:#000;left:274.86px;transform-origin:0 0;transform:scaleX(0.9571);">Edit</span>
<div style="left:379.01px;top:290.78px;width:72.99px;height:16px;overflow:hidden"><span class="t" style="left:0;top:0;font-size:12px;color:#000;transform-origin:0 0;transform:scaleX(0.9831)">28/11/2025 11:33:19 AM</span></div>
<span class="t" style="top:290.78px;font-size:12px;color:#000;left:452.36px;transform-origin:0 0;transform:scaleX(0.8941);">TPBDOSALEBOOK</span>
<span class="t" style="top:290.78px;font-size:12px;color:#000;left:552.95px;transform-origin:0 0;transform:scaleX(0.9047);">2</span>
<div style="left:653.95px;top:290.78px;width:99.95px;height:16px;overflow:hidden"><span class="t" style="left:0;top:0;font-size:12px;color:#000;transform-origin:0 0;transform:scaleX(0.9742)">purchaser_dob</span></div>
<div style="left:754.92px;top:290.78px;width:49.98px;height:16px;overflow:hidden"><span class="t" style="left:0;top:0;font-size:12px;color:#000;transform-origin:0 0;transform:scaleX(0.9657)">13/05/1990</span></div>
<span class="t" style="top:290.78px;font-size:12px;color:#000;left:908.18px;transform-origin:0 0;transform:scaleX(1.0256);">Administrator</span>
<span class="t" style="top:290.78px;font-size:12px;color:#000;right:864.01px;transform-origin:100% 0;transform:scaleX(0.8374);">1</span>
<div style="left:224px;top:309px;width:836px;height:19px;background:#9ab4d3;"></div>
<div style="left:274px;top:309px;width:1px;height:19px;background:#e6edf5;"></div>
<div style="left:375px;top:309px;width:1px;height:19px;background:#e6edf5;"></div>
<div style="left:451px;top:309px;width:1px;height:19px;background:#e6edf5;"></div>
<div style="left:552px;top:309px;width:1px;height:19px;background:#e6edf5;"></div>
<div style="left:653px;top:309px;width:1px;height:19px;background:#e6edf5;"></div>
<div style="left:754px;top:309px;width:1px;height:19px;background:#e6edf5;"></div>
<div style="left:805px;top:309px;width:1px;height:19px;background:#e6edf5;"></div>
<div style="left:856px;top:309px;width:1px;height:19px;background:#e6edf5;"></div>
<div style="left:907px;top:309px;width:1px;height:19px;background:#e6edf5;"></div>
<div style="left:1008px;top:309px;width:1px;height:19px;background:#e6edf5;"></div>
<div style="left:1059px;top:309px;width:1px;height:19px;background:#e6edf5;"></div>
<div style="left:211px;top:328px;width:13px;height:1px;background:#cfcfcf;"></div>
<div style="left:223px;top:309px;width:1px;height:20px;background:#cfcfcf;"></div>
<span class="t" style="top:310.78px;font-size:12px;color:#000;right:1648.88px;transform-origin:100% 0;transform:scaleX(0.9061);">204</span>
<span class="t" style="top:310.78px;font-size:12px;color:#000;left:274.86px;transform-origin:0 0;transform:scaleX(0.9571);">Edit</span>
<div style="left:379.01px;top:310.78px;width:72.99px;height:16px;overflow:hidden"><span class="t" style="left:0;top:0;font-size:12px;color:#000;transform-origin:0 0;transform:scaleX(0.9831)">28/11/2025 11:33:19 AM</span></div>
<span class="t" style="top:310.78px;font-size:12px;color:#000;left:452.36px;transform-origin:0 0;transform:scaleX(0.8941);">TPBDOSALEBOOK</span>
<span class="t" style="top:310.78px;font-size:12px;color:#000;left:552.95px;transform-origin:0 0;transform:scaleX(0.9047);">2</span>
<div style="left:654.39px;top:310.78px;width:99.51px;height:16px;overflow:hidden"><span class="t" style="left:0;top:0;font-size:12px;color:#000;transform-origin:0 0;transform:scaleX(0.9192)">sale_status</span></div>
<div style="left:755.25px;top:310.78px;width:49.65px;height:16px;overflow:hidden"><span class="t" style="left:0;top:0;font-size:12px;color:#000;transform-origin:0 0;transform:scaleX(0.9047)">2</span></div>
<div style="left:806.38px;top:310.78px;width:49.52px;height:16px;overflow:hidden"><span class="t" style="left:0;top:0;font-size:12px;color:#000;transform-origin:0 0;transform:scaleX(0.9047)">0</span></div>
<span class="t" style="top:310.78px;font-size:12px;color:#000;left:908.18px;transform-origin:0 0;transform:scaleX(1.0256);">Administrator</span>
<span class="t" style="top:310.78px;font-size:12px;color:#000;right:864.01px;transform-origin:100% 0;transform:scaleX(0.8374);">1</span>
<div style="left:274px;top:329px;width:1px;height:19px;background:#ededed;"></div>
<div style="left:375px;top:329px;width:1px;height:19px;background:#ededed;"></div>
<div style="left:451px;top:329px;width:1px;height:19px;background:#ededed;"></div>
<div style="left:552px;top:329px;width:1px;height:19px;background:#ededed;"></div>
<div style="left:653px;top:329px;width:1px;height:19px;background:#ededed;"></div>
<div style="left:754px;top:329px;width:1px;height:19px;background:#ededed;"></div>
<div style="left:805px;top:329px;width:1px;height:19px;background:#ededed;"></div>
<div style="left:856px;top:329px;width:1px;height:19px;background:#ededed;"></div>
<div style="left:907px;top:329px;width:1px;height:19px;background:#ededed;"></div>
<div style="left:1008px;top:329px;width:1px;height:19px;background:#ededed;"></div>
<div style="left:1059px;top:329px;width:1px;height:19px;background:#ededed;"></div>
<div style="left:224px;top:348px;width:836px;height:1px;background:#efefef;"></div>
<div style="left:211px;top:348px;width:13px;height:1px;background:#cfcfcf;"></div>
<div style="left:223px;top:329px;width:1px;height:20px;background:#cfcfcf;"></div>
<span class="t" style="top:330.78px;font-size:12px;color:#000;right:1648.73px;transform-origin:100% 0;transform:scaleX(0.9061);">188</span>
<span class="t" style="top:330.78px;font-size:12px;color:#000;left:274.86px;transform-origin:0 0;transform:scaleX(0.9571);">Edit</span>
<div style="left:379.01px;top:330.78px;width:72.99px;height:16px;overflow:hidden"><span class="t" style="left:0;top:0;font-size:12px;color:#000;transform-origin:0 0;transform:scaleX(0.9831)">28/11/2025 11:33:19 AM</span></div>
<span class="t" style="top:330.78px;font-size:12px;color:#000;left:452.36px;transform-origin:0 0;transform:scaleX(0.8941);">TPBDOSALEBOOK</span>
<span class="t" style="top:330.78px;font-size:12px;color:#000;left:552.95px;transform-origin:0 0;transform:scaleX(0.9047);">2</span>
<div style="left:653.96px;top:330.78px;width:99.94px;height:16px;overflow:hidden"><span class="t" style="left:0;top:0;font-size:12px;color:#000;transform-origin:0 0;transform:scaleX(0.9609)">purchase_date</span></div>
<div style="left:754.92px;top:330.78px;width:49.98px;height:16px;overflow:hidden"><span class="t" style="left:0;top:0;font-size:12px;color:#000;transform-origin:0 0;transform:scaleX(0.9657)">18/10/2025</span></div>
<span class="t" style="top:330.78px;font-size:12px;color:#000;left:908.18px;transform-origin:0 0;transform:scaleX(1.0256);">Administrator</span>
<span class="t" style="top:330.78px;font-size:12px;color:#000;right:864.01px;transform-origin:100% 0;transform:scaleX(0.8374);">1</span>
<div style="left:224px;top:349px;width:836px;height:19px;background:#9ab4d3;"></div>
<div style="left:274px;top:349px;width:1px;height:19px;background:#e6edf5;"></div>
<div style="left:375px;top:349px;width:1px;height:19px;background:#e6edf5;"></div>
<div style="left:451px;top:349px;width:1px;height:19px;background:#e6edf5;"></div>
<div style="left:552px;top:349px;width:1px;height:19px;background:#e6edf5;"></div>
<div style="left:653px;top:349px;width:1px;height:19px;background:#e6edf5;"></div>
<div style="left:754px;top:349px;width:1px;height:19px;background:#e6edf5;"></div>
<div style="left:805px;top:349px;width:1px;height:19px;background:#e6edf5;"></div>
<div style="left:856px;top:349px;width:1px;height:19px;background:#e6edf5;"></div>
<div style="left:907px;top:349px;width:1px;height:19px;background:#e6edf5;"></div>
<div style="left:1008px;top:349px;width:1px;height:19px;background:#e6edf5;"></div>
<div style="left:1059px;top:349px;width:1px;height:19px;background:#e6edf5;"></div>
<div style="left:211px;top:368px;width:13px;height:1px;background:#cfcfcf;"></div>
<div style="left:223px;top:349px;width:1px;height:20px;background:#cfcfcf;"></div>
<span class="t" style="top:350.78px;font-size:12px;color:#000;right:1648.69px;transform-origin:100% 0;transform:scaleX(0.9061);">189</span>
<span class="t" style="top:350.78px;font-size:12px;color:#000;left:274.86px;transform-origin:0 0;transform:scaleX(0.9571);">Edit</span>
<div style="left:379.01px;top:350.78px;width:72.99px;height:16px;overflow:hidden"><span class="t" style="left:0;top:0;font-size:12px;color:#000;transform-origin:0 0;transform:scaleX(0.9831)">28/11/2025 11:33:19 AM</span></div>
<span class="t" style="top:350.78px;font-size:12px;color:#000;left:452.36px;transform-origin:0 0;transform:scaleX(0.8941);">TPBDOSALEBOOK</span>
<span class="t" style="top:350.78px;font-size:12px;color:#000;left:552.95px;transform-origin:0 0;transform:scaleX(0.9047);">2</span>
<div style="left:653.95px;top:350.78px;width:99.95px;height:16px;overflow:hidden"><span class="t" style="left:0;top:0;font-size:12px;color:#000;transform-origin:0 0;transform:scaleX(0.9666)">purchaser_residential_street</span></div>
<div style="left:755.54px;top:350.78px;width:49.36px;height:16px;overflow:hidden"><span class="t" style="left:0;top:0;font-size:12px;color:#000;transform-origin:0 0;transform:scaleX(0.9539)">Test</span></div>
<span class="t" style="top:350.78px;font-size:12px;color:#000;left:908.18px;transform-origin:0 0;transform:scaleX(1.0256);">Administrator</span>
<span class="t" style="top:350.78px;font-size:12px;color:#000;right:864.01px;transform-origin:100% 0;transform:scaleX(0.8374);">1</span>
<div style="left:274px;top:369px;width:1px;height:19px;background:#ededed;"></div>
<div style="left:375px;top:369px;width:1px;height:19px;background:#ededed;"></div>
<div style="left:451px;top:369px;width:1px;height:19px;background:#ededed;"></div>
<div style="left:552px;top:369px;width:1px;height:19px;background:#ededed;"></div>
<div style="left:653px;top:369px;width:1px;height:19px;background:#ededed;"></div>
<div style="left:754px;top:369px;width:1px;height:19px;background:#ededed;"></div>
<div style="left:805px;top:369px;width:1px;height:19px;background:#ededed;"></div>
<div style="left:856px;top:369px;width:1px;height:19px;background:#ededed;"></div>
<div style="left:907px;top:369px;width:1px;height:19px;background:#ededed;"></div>
<div style="left:1008px;top:369px;width:1px;height:19px;background:#ededed;"></div>
<div style="left:1059px;top:369px;width:1px;height:19px;background:#ededed;"></div>
<div style="left:224px;top:388px;width:836px;height:1px;background:#efefef;"></div>
<div style="left:211px;top:388px;width:13px;height:1px;background:#cfcfcf;"></div>
<div style="left:223px;top:369px;width:1px;height:20px;background:#cfcfcf;"></div>
<span class="t" style="top:370.78px;font-size:12px;color:#000;right:1648.78px;transform-origin:100% 0;transform:scaleX(0.9061);">190</span>
<span class="t" style="top:370.78px;font-size:12px;color:#000;left:274.86px;transform-origin:0 0;transform:scaleX(0.9571);">Edit</span>
<div style="left:379.01px;top:370.78px;width:72.99px;height:16px;overflow:hidden"><span class="t" style="left:0;top:0;font-size:12px;color:#000;transform-origin:0 0;transform:scaleX(0.9831)">28/11/2025 11:33:19 AM</span></div>
<span class="t" style="top:370.78px;font-size:12px;color:#000;left:452.36px;transform-origin:0 0;transform:scaleX(0.8941);">TPBDOSALEBOOK</span>
<span class="t" style="top:370.78px;font-size:12px;color:#000;left:552.95px;transform-origin:0 0;transform:scaleX(0.9047);">2</span>
<div style="left:653.95px;top:370.78px;width:99.95px;height:16px;overflow:hidden"><span class="t" style="left:0;top:0;font-size:12px;color:#000;transform-origin:0 0;transform:scaleX(0.9666)">purchaser_residential_street</span></div>
<div style="left:754.90px;top:370.78px;width:50.00px;height:16px;overflow:hidden"><span class="t" style="left:0;top:0;font-size:12px;color:#000;transform-origin:0 0;transform:scaleX(0.9856)">10 Home Street</span></div>
<span class="t" style="top:370.78px;font-size:12px;color:#000;left:908.18px;transform-origin:0 0;transform:scaleX(1.0256);">Administrator</span>
<span class="t" style="top:370.78px;font-size:12px;color:#000;right:864.01px;transform-origin:100% 0;transform:scaleX(0.8374);">1</span>
<div style="left:224px;top:389px;width:836px;height:19px;background:#9ab4d3;"></div>
<div style="left:274px;top:389px;width:1px;height:19px;background:#e6edf5;"></div>
<div style="left:375px;top:389px;width:1px;height:19px;background:#e6edf5;"></div>
<div style="left:451px;top:389px;width:1px;height:19px;background:#e6edf5;"></div>
<div style="left:552px;top:389px;width:1px;height:19px;background:#e6edf5;"></div>
<div style="left:653px;top:389px;width:1px;height:19px;background:#e6edf5;"></div>
<div style="left:754px;top:389px;width:1px;height:19px;background:#e6edf5;"></div>
<div style="left:805px;top:389px;width:1px;height:19px;background:#e6edf5;"></div>
<div style="left:856px;top:389px;width:1px;height:19px;background:#e6edf5;"></div>
<div style="left:907px;top:389px;width:1px;height:19px;background:#e6edf5;"></div>
<div style="left:1008px;top:389px;width:1px;height:19px;background:#e6edf5;"></div>
<div style="left:1059px;top:389px;width:1px;height:19px;background:#e6edf5;"></div>
<div style="left:211px;top:408px;width:13px;height:1px;background:#cfcfcf;"></div>
<div style="left:223px;top:389px;width:1px;height:20px;background:#cfcfcf;"></div>
<span class="t" style="top:390.78px;font-size:12px;color:#000;right:1648.67px;transform-origin:100% 0;transform:scaleX(0.9061);">191</span>
<span class="t" style="top:390.78px;font-size:12px;color:#000;left:274.86px;transform-origin:0 0;transform:scaleX(0.9571);">Edit</span>
<div style="left:379.01px;top:390.78px;width:72.99px;height:16px;overflow:hidden"><span class="t" style="left:0;top:0;font-size:12px;color:#000;transform-origin:0 0;transform:scaleX(0.9831)">28/11/2025 11:33:19 AM</span></div>
<span class="t" style="top:390.78px;font-size:12px;color:#000;left:452.36px;transform-origin:0 0;transform:scaleX(0.8941);">TPBDOSALEBOOK</span>
<span class="t" style="top:390.78px;font-size:12px;color:#000;left:552.95px;transform-origin:0 0;transform:scaleX(0.9047);">2</span>
<div style="left:653.95px;top:390.78px;width:99.95px;height:16px;overflow:hidden"><span class="t" style="left:0;top:0;font-size:12px;color:#000;transform-origin:0 0;transform:scaleX(0.9666)">purchaser_residential_suburb</span></div>
<div style="left:755.54px;top:390.78px;width:49.36px;height:16px;overflow:hidden"><span class="t" style="left:0;top:0;font-size:12px;color:#000;transform-origin:0 0;transform:scaleX(0.9539)">Test</span></div>
<span class="t" style="top:390.78px;font-size:12px;color:#000;left:908.18px;transform-origin:0 0;transform:scaleX(1.0256);">Administrator</span>
<span class="t" style="top:390.78px;font-size:12px;color:#000;right:864.01px;transform-origin:100% 0;transform:scaleX(0.8374);">1</span>
<div style="left:274px;top:409px;width:1px;height:19px;background:#ededed;"></div>
<div style="left:375px;top:409px;width:1px;height:19px;background:#ededed;"></div>
<div style="left:451px;top:409px;width:1px;height:19px;background:#ededed;"></div>
<div style="left:552px;top:409px;width:1px;height:19px;background:#ededed;"></div>
<div style="left:653px;top:409px;width:1px;height:19px;background:#ededed;"></div>
<div style="left:754px;top:409px;width:1px;height:19px;background:#ededed;"></div>
<div style="left:805px;top:409px;width:1px;height:19px;background:#ededed;"></div>
<div style="left:856px;top:409px;width:1px;height:19px;background:#ededed;"></div>
<div style="left:907px;top:409px;width:1px;height:19px;background:#ededed;"></div>
<div style="left:1008px;top:409px;width:1px;height:19px;background:#ededed;"></div>
<div style="left:1059px;top:409px;width:1px;height:19px;background:#ededed;"></div>
<div style="left:224px;top:428px;width:836px;height:1px;background:#efefef;"></div>
<div style="left:211px;top:428px;width:13px;height:1px;background:#cfcfcf;"></div>
<div style="left:223px;top:409px;width:1px;height:20px;background:#cfcfcf;"></div>
<span class="t" style="top:410.78px;font-size:12px;color:#000;right:1648.72px;transform-origin:100% 0;transform:scaleX(0.9061);">193</span>
<span class="t" style="top:410.78px;font-size:12px;color:#000;left:274.86px;transform-origin:0 0;transform:scaleX(0.9571);">Edit</span>
<div style="left:379.01px;top:410.78px;width:72.99px;height:16px;overflow:hidden"><span class="t" style="left:0;top:0;font-size:12px;color:#000;transform-origin:0 0;transform:scaleX(0.9831)">28/11/2025 11:33:19 AM</span></div>
<span class="t" style="top:410.78px;font-size:12px;color:#000;left:452.36px;transform-origin:0 0;transform:scaleX(0.8941);">TPBDOSALEBOOK</span>
<span class="t" style="top:410.78px;font-size:12px;color:#000;left:552.95px;transform-origin:0 0;transform:scaleX(0.9047);">2</span>
<div style="left:653.97px;top:410.78px;width:99.93px;height:16px;overflow:hidden"><span class="t" style="left:0;top:0;font-size:12px;color:#000;transform-origin:0 0;transform:scaleX(0.9470)">purchaser_postal_address</span></div>
<div style="left:755.54px;top:410.78px;width:49.36px;height:16px;overflow:hidden"><span class="t" style="left:0;top:0;font-size:12px;color:#000;transform-origin:0 0;transform:scaleX(0.9539)">Test</span></div>
<span class="t" style="top:410.78px;font-size:12px;color:#000;left:908.18px;transform-origin:0 0;transform:scaleX(1.0256);">Administrator</span>
<span class="t" style="top:410.78px;font-size:12px;color:#000;right:864.01px;transform-origin:100% 0;transform:scaleX(0.8374);">1</span>
<div style="left:224px;top:429px;width:836px;height:19px;background:#9ab4d3;"></div>
<div style="left:274px;top:429px;width:1px;height:19px;background:#e6edf5;"></div>
<div style="left:375px;top:429px;width:1px;height:19px;background:#e6edf5;"></div>
<div style="left:451px;top:429px;width:1px;height:19px;background:#e6edf5;"></div>
<div style="left:552px;top:429px;width:1px;height:19px;background:#e6edf5;"></div>
<div style="left:653px;top:429px;width:1px;height:19px;background:#e6edf5;"></div>
<div style="left:754px;top:429px;width:1px;height:19px;background:#e6edf5;"></div>
<div style="left:805px;top:429px;width:1px;height:19px;background:#e6edf5;"></div>
<div style="left:856px;top:429px;width:1px;height:19px;background:#e6edf5;"></div>
<div style="left:907px;top:429px;width:1px;height:19px;background:#e6edf5;"></div>
<div style="left:1008px;top:429px;width:1px;height:19px;background:#e6edf5;"></div>
<div style="left:1059px;top:429px;width:1px;height:19px;background:#e6edf5;"></div>
<div style="left:211px;top:448px;width:13px;height:1px;background:#cfcfcf;"></div>
<div style="left:223px;top:429px;width:1px;height:20px;background:#cfcfcf;"></div>
<span class="t" style="top:430.78px;font-size:12px;color:#000;right:1648.65px;transform-origin:100% 0;transform:scaleX(0.9061);">192</span>
<span class="t" style="top:430.78px;font-size:12px;color:#000;left:274.86px;transform-origin:0 0;transform:scaleX(0.9571);">Edit</span>
<div style="left:379.01px;top:430.78px;width:72.99px;height:16px;overflow:hidden"><span class="t" style="left:0;top:0;font-size:12px;color:#000;transform-origin:0 0;transform:scaleX(0.9831)">28/11/2025 11:33:19 AM</span></div>
<span class="t" style="top:430.78px;font-size:12px;color:#000;left:452.36px;transform-origin:0 0;transform:scaleX(0.8941);">TPBDOSALEBOOK</span>
<span class="t" style="top:430.78px;font-size:12px;color:#000;left:552.95px;transform-origin:0 0;transform:scaleX(0.9047);">2</span>
<div style="left:653.95px;top:430.78px;width:99.95px;height:16px;overflow:hidden"><span class="t" style="left:0;top:0;font-size:12px;color:#000;transform-origin:0 0;transform:scaleX(0.9666)">purchaser_residential_postcode</span></div>
<div style="left:755.36px;top:430.78px;width:49.54px;height:16px;overflow:hidden"><span class="t" style="left:0;top:0;font-size:12px;color:#000;transform-origin:0 0;transform:scaleX(0.9063)">5222</span></div>
<span class="t" style="top:430.78px;font-size:12px;color:#000;left:908.18px;transform-origin:0 0;transform:scaleX(1.0256);">Administrator</span>
<span class="t" style="top:430.78px;font-size:12px;color:#000;right:864.01px;transform-origin:100% 0;transform:scaleX(0.8374);">1</span>
<div style="left:274px;top:449px;width:1px;height:19px;background:#ededed;"></div>
<div style="left:375px;top:449px;width:1px;height:19px;background:#ededed;"></div>
<div style="left:451px;top:449px;width:1px;height:19px;background:#ededed;"></div>
<div style="left:552px;top:449px;width:1px;height:19px;background:#ededed;"></div>
<div style="left:653px;top:449px;width:1px;height:19px;background:#ededed;"></div>
<div style="left:754px;top:449px;width:1px;height:19px;background:#ededed;"></div>
<div style="left:805px;top:449px;width:1px;height:19px;background:#ededed;"></div>
<div style="left:856px;top:449px;width:1px;height:19px;background:#ededed;"></div>
<div style="left:907px;top:449px;width:1px;height:19px;background:#ededed;"></div>
<div style="left:1008px;top:449px;width:1px;height:19px;background:#ededed;"></div>
<div style="left:1059px;top:449px;width:1px;height:19px;background:#ededed;"></div>
<div style="left:224px;top:468px;width:836px;height:1px;background:#efefef;"></div>
<div style="left:211px;top:468px;width:13px;height:1px;background:#cfcfcf;"></div>
<div style="left:223px;top:449px;width:1px;height:20px;background:#cfcfcf;"></div>
<span class="t" style="top:450.78px;font-size:12px;color:#000;right:1648.88px;transform-origin:100% 0;transform:scaleX(0.9061);">194</span>
<span class="t" style="top:450.78px;font-size:12px;color:#000;left:274.86px;transform-origin:0 0;transform:scaleX(0.9571);">Edit</span>
<div style="left:379.01px;top:450.78px;width:72.99px;height:16px;overflow:hidden"><span class="t" style="left:0;top:0;font-size:12px;color:#000;transform-origin:0 0;transform:scaleX(0.9831)">28/11/2025 11:33:19 AM</span></div>
<span class="t" style="top:450.78px;font-size:12px;color:#000;left:452.36px;transform-origin:0 0;transform:scaleX(0.8941);">TPBDOSALEBOOK</span>
<span class="t" style="top:450.78px;font-size:12px;color:#000;left:552.95px;transform-origin:0 0;transform:scaleX(0.9047);">2</span>
<div style="left:653.97px;top:450.78px;width:99.93px;height:16px;overflow:hidden"><span class="t" style="left:0;top:0;font-size:12px;color:#000;transform-origin:0 0;transform:scaleX(0.9470)">purchaser_postal_address</span></div>
<div style="left:754.90px;top:450.78px;width:50.00px;height:16px;overflow:hidden"><span class="t" style="left:0;top:0;font-size:12px;color:#000;transform-origin:0 0;transform:scaleX(0.9856)">10 Home Street</span></div>
<span class="t" style="top:450.78px;font-size:12px;color:#000;left:908.18px;transform-origin:0 0;transform:scaleX(1.0256);">Administrator</span>
<span class="t" style="top:450.78px;font-size:12px;color:#000;right:864.01px;transform-origin:100% 0;transform:scaleX(0.8374);">1</span>
<div style="left:224px;top:469px;width:836px;height:19px;background:#9ab4d3;"></div>
<div style="left:274px;top:469px;width:1px;height:19px;background:#e6edf5;"></div>
<div style="left:375px;top:469px;width:1px;height:19px;background:#e6edf5;"></div>
<div style="left:451px;top:469px;width:1px;height:19px;background:#e6edf5;"></div>
<div style="left:552px;top:469px;width:1px;height:19px;background:#e6edf5;"></div>
<div style="left:653px;top:469px;width:1px;height:19px;background:#e6edf5;"></div>
<div style="left:754px;top:469px;width:1px;height:19px;background:#e6edf5;"></div>
<div style="left:805px;top:469px;width:1px;height:19px;background:#e6edf5;"></div>
<div style="left:856px;top:469px;width:1px;height:19px;background:#e6edf5;"></div>
<div style="left:907px;top:469px;width:1px;height:19px;background:#e6edf5;"></div>
<div style="left:1008px;top:469px;width:1px;height:19px;background:#e6edf5;"></div>
<div style="left:1059px;top:469px;width:1px;height:19px;background:#e6edf5;"></div>
<div style="left:211px;top:488px;width:13px;height:1px;background:#cfcfcf;"></div>
<div style="left:223px;top:469px;width:1px;height:20px;background:#cfcfcf;"></div>
<span class="t" style="top:470.78px;font-size:12px;color:#000;right:1648.74px;transform-origin:100% 0;transform:scaleX(0.9061);">195</span>
<span class="t" style="top:470.78px;font-size:12px;color:#000;left:274.86px;transform-origin:0 0;transform:scaleX(0.9571);">Edit</span>
<div style="left:379.01px;top:470.78px;width:72.99px;height:16px;overflow:hidden"><span class="t" style="left:0;top:0;font-size:12px;color:#000;transform-origin:0 0;transform:scaleX(0.9831)">28/11/2025 11:33:19 AM</span></div>
<span class="t" style="top:470.78px;font-size:12px;color:#000;left:452.36px;transform-origin:0 0;transform:scaleX(0.8941);">TPBDOSALEBOOK</span>
<span class="t" style="top:470.78px;font-size:12px;color:#000;left:552.95px;transform-origin:0 0;transform:scaleX(0.9047);">2</span>
<div style="left:653.97px;top:470.78px;width:99.93px;height:16px;overflow:hidden"><span class="t" style="left:0;top:0;font-size:12px;color:#000;transform-origin:0 0;transform:scaleX(0.9470)">purchaser_postal_suburb</span></div>
<div style="left:755.54px;top:470.78px;width:49.36px;height:16px;overflow:hidden"><span class="t" style="left:0;top:0;font-size:12px;color:#000;transform-origin:0 0;transform:scaleX(0.9539)">Test</span></div>
<span class="t" style="top:470.78px;font-size:12px;color:#000;left:908.18px;transform-origin:0 0;transform:scaleX(1.0256);">Administrator</span>
<span class="t" style="top:470.78px;font-size:12px;color:#000;right:864.01px;transform-origin:100% 0;transform:scaleX(0.8374);">1</span>
<div style="left:274px;top:489px;width:1px;height:19px;background:#ededed;"></div>
<div style="left:375px;top:489px;width:1px;height:19px;background:#ededed;"></div>
<div style="left:451px;top:489px;width:1px;height:19px;background:#ededed;"></div>
<div style="left:552px;top:489px;width:1px;height:19px;background:#ededed;"></div>
<div style="left:653px;top:489px;width:1px;height:19px;background:#ededed;"></div>
<div style="left:754px;top:489px;width:1px;height:19px;background:#ededed;"></div>
<div style="left:805px;top:489px;width:1px;height:19px;background:#ededed;"></div>
<div style="left:856px;top:489px;width:1px;height:19px;background:#ededed;"></div>
<div style="left:907px;top:489px;width:1px;height:19px;background:#ededed;"></div>
<div style="left:1008px;top:489px;width:1px;height:19px;background:#ededed;"></div>
<div style="left:1059px;top:489px;width:1px;height:19px;background:#ededed;"></div>
<div style="left:224px;top:508px;width:836px;height:1px;background:#efefef;"></div>
<div style="left:211px;top:508px;width:13px;height:1px;background:#cfcfcf;"></div>
<div style="left:223px;top:489px;width:1px;height:20px;background:#cfcfcf;"></div>
<span class="t" style="top:490.78px;font-size:12px;color:#000;right:1648.72px;transform-origin:100% 0;transform:scaleX(0.9061);">196</span>
<span class="t" style="top:490.78px;font-size:12px;color:#000;left:274.86px;transform-origin:0 0;transform:scaleX(0.9571);">Edit</span>
<div style="left:379.01px;top:490.78px;width:72.99px;height:16px;overflow:hidden"><span class="t" style="left:0;top:0;font-size:12px;color:#000;transform-origin:0 0;transform:scaleX(0.9831)">28/11/2025 11:33:19 AM</span></div>
<span class="t" style="top:490.78px;font-size:12px;color:#000;left:452.36px;transform-origin:0 0;transform:scaleX(0.8941);">TPBDOSALEBOOK</span>
<span class="t" style="top:490.78px;font-size:12px;color:#000;left:552.95px;transform-origin:0 0;transform:scaleX(0.9047);">2</span>
<div style="left:653.97px;top:490.78px;width:99.93px;height:16px;overflow:hidden"><span class="t" style="left:0;top:0;font-size:12px;color:#000;transform-origin:0 0;transform:scaleX(0.9470)">purchaser_postal_postcode</span></div>
<div style="left:755.36px;top:490.78px;width:49.54px;height:16px;overflow:hidden"><span class="t" style="left:0;top:0;font-size:12px;color:#000;transform-origin:0 0;transform:scaleX(0.9063)">5222</span></div>
<span class="t" style="top:490.78px;font-size:12px;color:#000;left:908.18px;transform-origin:0 0;transform:scaleX(1.0256);">Administrator</span>
<span class="t" style="top:490.78px;font-size:12px;color:#000;right:864.01px;transform-origin:100% 0;transform:scaleX(0.8374);">1</span>
<div style="left:224px;top:509px;width:836px;height:19px;background:#9ab4d3;"></div>
<div style="left:274px;top:509px;width:1px;height:19px;background:#e6edf5;"></div>
<div style="left:375px;top:509px;width:1px;height:19px;background:#e6edf5;"></div>
<div style="left:451px;top:509px;width:1px;height:19px;background:#e6edf5;"></div>
<div style="left:552px;top:509px;width:1px;height:19px;background:#e6edf5;"></div>
<div style="left:653px;top:509px;width:1px;height:19px;background:#e6edf5;"></div>
<div style="left:754px;top:509px;width:1px;height:19px;background:#e6edf5;"></div>
<div style="left:805px;top:509px;width:1px;height:19px;background:#e6edf5;"></div>
<div style="left:856px;top:509px;width:1px;height:19px;background:#e6edf5;"></div>
<div style="left:907px;top:509px;width:1px;height:19px;background:#e6edf5;"></div>
<div style="left:1008px;top:509px;width:1px;height:19px;background:#e6edf5;"></div>
<div style="left:1059px;top:509px;width:1px;height:19px;background:#e6edf5;"></div>
<div style="left:211px;top:528px;width:13px;height:1px;background:#cfcfcf;"></div>
<div style="left:223px;top:509px;width:1px;height:20px;background:#cfcfcf;"></div>
<span class="t" style="top:510.78px;font-size:12px;color:#000;right:1648.65px;transform-origin:100% 0;transform:scaleX(0.9061);">197</span>
<span class="t" style="top:510.78px;font-size:12px;color:#000;left:274.86px;transform-origin:0 0;transform:scaleX(0.9571);">Edit</span>
<div style="left:379.01px;top:510.78px;width:72.99px;height:16px;overflow:hidden"><span class="t" style="left:0;top:0;font-size:12px;color:#000;transform-origin:0 0;transform:scaleX(0.9831)">28/11/2025 11:33:19 AM</span></div>
<span class="t" style="top:510.78px;font-size:12px;color:#000;left:452.36px;transform-origin:0 0;transform:scaleX(0.8941);">TPBDOSALEBOOK</span>
<span class="t" style="top:510.78px;font-size:12px;color:#000;left:552.95px;transform-origin:0 0;transform:scaleX(0.9047);">2</span>
<div style="left:653.95px;top:510.78px;width:99.95px;height:16px;overflow:hidden"><span class="t" style="left:0;top:0;font-size:12px;color:#000;transform-origin:0 0;transform:scaleX(0.9742)">purchaser_garaging_address</span></div>
<div style="left:755.54px;top:510.78px;width:49.36px;height:16px;overflow:hidden"><span class="t" style="left:0;top:0;font-size:12px;color:#000;transform-origin:0 0;transform:scaleX(0.9539)">Test</span></div>
<span class="t" style="top:510.78px;font-size:12px;color:#000;left:908.18px;transform-origin:0 0;transform:scaleX(1.0256);">Administrator</span>
<span class="t" style="top:510.78px;font-size:12px;color:#000;right:864.01px;transform-origin:100% 0;transform:scaleX(0.8374);">1</span>
<div style="left:274px;top:529px;width:1px;height:19px;background:#ededed;"></div>
<div style="left:375px;top:529px;width:1px;height:19px;background:#ededed;"></div>
<div style="left:451px;top:529px;width:1px;height:19px;background:#ededed;"></div>
<div style="left:552px;top:529px;width:1px;height:19px;background:#ededed;"></div>
<div style="left:653px;top:529px;width:1px;height:19px;background:#ededed;"></div>
<div style="left:754px;top:529px;width:1px;height:19px;background:#ededed;"></div>
<div style="left:805px;top:529px;width:1px;height:19px;background:#ededed;"></div>
<div style="left:856px;top:529px;width:1px;height:19px;background:#ededed;"></div>
<div style="left:907px;top:529px;width:1px;height:19px;background:#ededed;"></div>
<div style="left:1008px;top:529px;width:1px;height:19px;background:#ededed;"></div>
<div style="left:1059px;top:529px;width:1px;height:19px;background:#ededed;"></div>
<div style="left:224px;top:548px;width:836px;height:1px;background:#efefef;"></div>
<div style="left:211px;top:548px;width:13px;height:1px;background:#cfcfcf;"></div>
<div style="left:223px;top:529px;width:1px;height:20px;background:#cfcfcf;"></div>
<span class="t" style="top:530.78px;font-size:12px;color:#000;right:1648.73px;transform-origin:100% 0;transform:scaleX(0.9061);">198</span>
<span class="t" style="top:530.78px;font-size:12px;color:#000;left:274.86px;transform-origin:0 0;transform:scaleX(0.9571);">Edit</span>
<div style="left:379.01px;top:530.78px;width:72.99px;height:16px;overflow:hidden"><span class="t" style="left:0;top:0;font-size:12px;color:#000;transform-origin:0 0;transform:scaleX(0.9831)">28/11/2025 11:33:19 AM</span></div>
<span class="t" style="top:530.78px;font-size:12px;color:#000;left:452.36px;transform-origin:0 0;transform:scaleX(0.8941);">TPBDOSALEBOOK</span>
<span class="t" style="top:530.78px;font-size:12px;color:#000;left:552.95px;transform-origin:0 0;transform:scaleX(0.9047);">2</span>
<div style="left:653.95px;top:530.78px;width:99.95px;height:16px;overflow:hidden"><span class="t" style="left:0;top:0;font-size:12px;color:#000;transform-origin:0 0;transform:scaleX(0.9742)">purchaser_garaging_address</span></div>
<div style="left:754.90px;top:530.78px;width:50.00px;height:16px;overflow:hidden"><span class="t" style="left:0;top:0;font-size:12px;color:#000;transform-origin:0 0;transform:scaleX(0.9856)">10 Home Street</span></div>
<span class="t" style="top:530.78px;font-size:12px;color:#000;left:908.18px;transform-origin:0 0;transform:scaleX(1.0256);">Administrator</span>
<span class="t" style="top:530.78px;font-size:12px;color:#000;right:864.01px;transform-origin:100% 0;transform:scaleX(0.8374);">1</span>
<div style="left:224px;top:549px;width:836px;height:19px;background:#9ab4d3;"></div>
<div style="left:274px;top:549px;width:1px;height:19px;background:#e6edf5;"></div>
<div style="left:375px;top:549px;width:1px;height:19px;background:#e6edf5;"></div>
<div style="left:451px;top:549px;width:1px;height:19px;background:#e6edf5;"></div>
<div style="left:552px;top:549px;width:1px;height:19px;background:#e6edf5;"></div>
<div style="left:653px;top:549px;width:1px;height:19px;background:#e6edf5;"></div>
<div style="left:754px;top:549px;width:1px;height:19px;background:#e6edf5;"></div>
<div style="left:805px;top:549px;width:1px;height:19px;background:#e6edf5;"></div>
<div style="left:856px;top:549px;width:1px;height:19px;background:#e6edf5;"></div>
<div style="left:907px;top:549px;width:1px;height:19px;background:#e6edf5;"></div>
<div style="left:1008px;top:549px;width:1px;height:19px;background:#e6edf5;"></div>
<div style="left:1059px;top:549px;width:1px;height:19px;background:#e6edf5;"></div>
<div style="left:211px;top:568px;width:13px;height:1px;background:#cfcfcf;"></div>
<div style="left:223px;top:549px;width:1px;height:20px;background:#cfcfcf;"></div>
<span class="t" style="top:550.78px;font-size:12px;color:#000;right:1648.69px;transform-origin:100% 0;transform:scaleX(0.9061);">199</span>
<span class="t" style="top:550.78px;font-size:12px;color:#000;left:274.86px;transform-origin:0 0;transform:scaleX(0.9571);">Edit</span>
<div style="left:379.01px;top:550.78px;width:72.99px;height:16px;overflow:hidden"><span class="t" style="left:0;top:0;font-size:12px;color:#000;transform-origin:0 0;transform:scaleX(0.9831)">28/11/2025 11:33:19 AM</span></div>
<span class="t" style="top:550.78px;font-size:12px;color:#000;left:452.36px;transform-origin:0 0;transform:scaleX(0.8941);">TPBDOSALEBOOK</span>
<span class="t" style="top:550.78px;font-size:12px;color:#000;left:552.95px;transform-origin:0 0;transform:scaleX(0.9047);">2</span>
<div style="left:653.95px;top:550.78px;width:99.95px;height:16px;overflow:hidden"><span class="t" style="left:0;top:0;font-size:12px;color:#000;transform-origin:0 0;transform:scaleX(0.9742)">purchaser_garaging_suburb</span></div>
<div style="left:755.54px;top:550.78px;width:49.36px;height:16px;overflow:hidden"><span class="t" style="left:0;top:0;font-size:12px;color:#000;transform-origin:0 0;transform:scaleX(0.9539)">Test</span></div>
<span class="t" style="top:550.78px;font-size:12px;color:#000;left:908.18px;transform-origin:0 0;transform:scaleX(1.0256);">Administrator</span>
<span class="t" style="top:550.78px;font-size:12px;color:#000;right:864.01px;transform-origin:100% 0;transform:scaleX(0.8374);">1</span>
<div style="left:274px;top:569px;width:1px;height:19px;background:#ededed;"></div>
<div style="left:375px;top:569px;width:1px;height:19px;background:#ededed;"></div>
<div style="left:451px;top:569px;width:1px;height:19px;background:#ededed;"></div>
<div style="left:552px;top:569px;width:1px;height:19px;background:#ededed;"></div>
<div style="left:653px;top:569px;width:1px;height:19px;background:#ededed;"></div>
<div style="left:754px;top:569px;width:1px;height:19px;background:#ededed;"></div>
<div style="left:805px;top:569px;width:1px;height:19px;background:#ededed;"></div>
<div style="left:856px;top:569px;width:1px;height:19px;background:#ededed;"></div>
<div style="left:907px;top:569px;width:1px;height:19px;background:#ededed;"></div>
<div style="left:1008px;top:569px;width:1px;height:19px;background:#ededed;"></div>
<div style="left:1059px;top:569px;width:1px;height:19px;background:#ededed;"></div>
<div style="left:224px;top:588px;width:836px;height:1px;background:#efefef;"></div>
<div style="left:211px;top:588px;width:13px;height:1px;background:#cfcfcf;"></div>
<div style="left:223px;top:569px;width:1px;height:20px;background:#cfcfcf;"></div>
<span class="t" style="top:570.78px;font-size:12px;color:#000;right:1648.78px;transform-origin:100% 0;transform:scaleX(0.9061);">200</span>
<span class="t" style="top:570.78px;font-size:12px;color:#000;left:274.86px;transform-origin:0 0;transform:scaleX(0.9571);">Edit</span>
<div style="left:379.01px;top:570.78px;width:72.99px;height:16px;overflow:hidden"><span class="t" style="left:0;top:0;font-size:12px;color:#000;transform-origin:0 0;transform:scaleX(0.9831)">28/11/2025 11:33:19 AM</span></div>
<span class="t" style="top:570.78px;font-size:12px;color:#000;left:452.36px;transform-origin:0 0;transform:scaleX(0.8941);">TPBDOSALEBOOK</span>
<span class="t" style="top:570.78px;font-size:12px;color:#000;left:552.95px;transform-origin:0 0;transform:scaleX(0.9047);">2</span>
<div style="left:653.95px;top:570.78px;width:99.95px;height:16px;overflow:hidden"><span class="t" style="left:0;top:0;font-size:12px;color:#000;transform-origin:0 0;transform:scaleX(0.9742)">purchaser_garaging_postcode</span></div>
<div style="left:755.36px;top:570.78px;width:49.54px;height:16px;overflow:hidden"><span class="t" style="left:0;top:0;font-size:12px;color:#000;transform-origin:0 0;transform:scaleX(0.9063)">5222</span></div>
<span class="t" style="top:570.78px;font-size:12px;color:#000;left:908.18px;transform-origin:0 0;transform:scaleX(1.0256);">Administrator</span>
<span class="t" style="top:570.78px;font-size:12px;color:#000;right:864.01px;transform-origin:100% 0;transform:scaleX(0.8374);">1</span>
<div style="left:224px;top:589px;width:836px;height:19px;background:#9ab4d3;"></div>
<div style="left:274px;top:589px;width:1px;height:19px;background:#e6edf5;"></div>
<div style="left:375px;top:589px;width:1px;height:19px;background:#e6edf5;"></div>
<div style="left:451px;top:589px;width:1px;height:19px;background:#e6edf5;"></div>
<div style="left:552px;top:589px;width:1px;height:19px;background:#e6edf5;"></div>
<div style="left:653px;top:589px;width:1px;height:19px;background:#e6edf5;"></div>
<div style="left:754px;top:589px;width:1px;height:19px;background:#e6edf5;"></div>
<div style="left:805px;top:589px;width:1px;height:19px;background:#e6edf5;"></div>
<div style="left:856px;top:589px;width:1px;height:19px;background:#e6edf5;"></div>
<div style="left:907px;top:589px;width:1px;height:19px;background:#e6edf5;"></div>
<div style="left:1008px;top:589px;width:1px;height:19px;background:#e6edf5;"></div>
<div style="left:1059px;top:589px;width:1px;height:19px;background:#e6edf5;"></div>
<div style="left:211px;top:608px;width:13px;height:1px;background:#cfcfcf;"></div>
<div style="left:223px;top:589px;width:1px;height:20px;background:#cfcfcf;"></div>
<span class="t" style="top:590.78px;font-size:12px;color:#000;right:1648.67px;transform-origin:100% 0;transform:scaleX(0.9061);">201</span>
<span class="t" style="top:590.78px;font-size:12px;color:#000;left:274.86px;transform-origin:0 0;transform:scaleX(0.9571);">Edit</span>
<div style="left:379.01px;top:590.78px;width:72.99px;height:16px;overflow:hidden"><span class="t" style="left:0;top:0;font-size:12px;color:#000;transform-origin:0 0;transform:scaleX(0.9831)">28/11/2025 11:33:19 AM</span></div>
<span class="t" style="top:590.78px;font-size:12px;color:#000;left:452.36px;transform-origin:0 0;transform:scaleX(0.8941);">TPBDOSALEBOOK</span>
<span class="t" style="top:590.78px;font-size:12px;color:#000;left:552.95px;transform-origin:0 0;transform:scaleX(0.9047);">2</span>
<div style="left:653.96px;top:590.78px;width:99.94px;height:16px;overflow:hidden"><span class="t" style="left:0;top:0;font-size:12px;color:#000;transform-origin:0 0;transform:scaleX(0.9524)">purchaser_email_address</span></div>
<div style="left:755.63px;top:590.78px;width:49.27px;height:16px;overflow:hidden"><span class="t" style="left:0;top:0;font-size:12px;color:#000;transform-origin:0 0;transform:scaleX(0.9553)">test@test.com</span></div>
<span class="t" style="top:590.78px;font-size:12px;color:#000;left:908.18px;transform-origin:0 0;transform:scaleX(1.0256);">Administrator</span>
<span class="t" style="top:590.78px;font-size:12px;color:#000;right:864.01px;transform-origin:100% 0;transform:scaleX(0.8374);">1</span>
<div style="left:274px;top:609px;width:1px;height:19px;background:#ededed;"></div>
<div style="left:375px;top:609px;width:1px;height:19px;background:#ededed;"></div>
<div style="left:451px;top:609px;width:1px;height:19px;background:#ededed;"></div>
<div style="left:552px;top:609px;width:1px;height:19px;background:#ededed;"></div>
<div style="left:653px;top:609px;width:1px;height:19px;background:#ededed;"></div>
<div style="left:754px;top:609px;width:1px;height:19px;background:#ededed;"></div>
<div style="left:805px;top:609px;width:1px;height:19px;background:#ededed;"></div>
<div style="left:856px;top:609px;width:1px;height:19px;background:#ededed;"></div>
<div style="left:907px;top:609px;width:1px;height:19px;background:#ededed;"></div>
<div style="left:1008px;top:609px;width:1px;height:19px;background:#ededed;"></div>
<div style="left:1059px;top:609px;width:1px;height:19px;background:#ededed;"></div>
<div style="left:224px;top:628px;width:836px;height:1px;background:#efefef;"></div>
<div style="left:211px;top:628px;width:13px;height:1px;background:#cfcfcf;"></div>
<div style="left:223px;top:609px;width:1px;height:20px;background:#cfcfcf;"></div>
<span class="t" style="top:610.78px;font-size:12px;color:#000;right:1648.65px;transform-origin:100% 0;transform:scaleX(0.9061);">202</span>
<span class="t" style="top:610.78px;font-size:12px;color:#000;left:274.86px;transform-origin:0 0;transform:scaleX(0.9571);">Edit</span>
<div style="left:379.01px;top:610.78px;width:72.99px;height:16px;overflow:hidden"><span class="t" style="left:0;top:0;font-size:12px;color:#000;transform-origin:0 0;transform:scaleX(0.9831)">28/11/2025 11:33:19 AM</span></div>
<span class="t" style="top:610.78px;font-size:12px;color:#000;left:452.36px;transform-origin:0 0;transform:scaleX(0.8941);">TPBDOSALEBOOK</span>
<span class="t" style="top:610.78px;font-size:12px;color:#000;left:552.95px;transform-origin:0 0;transform:scaleX(0.9047);">2</span>
<div style="left:653.92px;top:610.78px;width:99.98px;height:16px;overflow:hidden"><span class="t" style="left:0;top:0;font-size:12px;color:#000;transform-origin:0 0;transform:scaleX(0.9847)">market_price</span></div>
<div style="left:754.97px;top:610.78px;width:49.93px;height:16px;overflow:hidden"><span class="t" style="left:0;top:0;font-size:12px;color:#000;transform-origin:0 0;transform:scaleX(0.9079)">15000</span></div>
<span class="t" style="top:610.78px;font-size:12px;color:#000;left:908.18px;transform-origin:0 0;transform:scaleX(1.0256);">Administrator</span>
<span class="t" style="top:610.78px;font-size:12px;color:#000;right:864.01px;transform-origin:100% 0;transform:scaleX(0.8374);">1</span>
<div style="left:224px;top:629px;width:836px;height:19px;background:#9ab4d3;"></div>
<div style="left:274px;top:629px;width:1px;height:19px;background:#e6edf5;"></div>
<div style="left:375px;top:629px;width:1px;height:19px;background:#e6edf5;"></div>
<div style="left:451px;top:629px;width:1px;height:19px;background:#e6edf5;"></div>
<div style="left:552px;top:629px;width:1px;height:19px;background:#e6edf5;"></div>
<div style="left:653px;top:629px;width:1px;height:19px;background:#e6edf5;"></div>
<div style="left:754px;top:629px;width:1px;height:19px;background:#e6edf5;"></div>
<div style="left:805px;top:629px;width:1px;height:19px;background:#e6edf5;"></div>
<div style="left:856px;top:629px;width:1px;height:19px;background:#e6edf5;"></div>
<div style="left:907px;top:629px;width:1px;height:19px;background:#e6edf5;"></div>
<div style="left:1008px;top:629px;width:1px;height:19px;background:#e6edf5;"></div>
<div style="left:1059px;top:629px;width:1px;height:19px;background:#e6edf5;"></div>
<div style="left:211px;top:648px;width:13px;height:1px;background:#cfcfcf;"></div>
<div style="left:223px;top:629px;width:1px;height:20px;background:#cfcfcf;"></div>
<span class="t" style="top:630.78px;font-size:12px;color:#000;right:1648.72px;transform-origin:100% 0;transform:scaleX(0.9061);">203</span>
<span class="t" style="top:630.78px;font-size:12px;color:#000;left:274.86px;transform-origin:0 0;transform:scaleX(0.9571);">Edit</span>
<div style="left:379.01px;top:630.78px;width:72.99px;height:16px;overflow:hidden"><span class="t" style="left:0;top:0;font-size:12px;color:#000;transform-origin:0 0;transform:scaleX(0.9831)">28/11/2025 11:33:19 AM</span></div>
<span class="t" style="top:630.78px;font-size:12px;color:#000;left:452.36px;transform-origin:0 0;transform:scaleX(0.8941);">TPBDOSALEBOOK</span>
<span class="t" style="top:630.78px;font-size:12px;color:#000;left:552.95px;transform-origin:0 0;transform:scaleX(0.9047);">2</span>
<div style="left:653.95px;top:630.78px;width:99.95px;height:16px;overflow:hidden"><span class="t" style="left:0;top:0;font-size:12px;color:#000;transform-origin:0 0;transform:scaleX(0.9663)">purchase_price</span></div>
<div style="left:754.97px;top:630.78px;width:49.93px;height:16px;overflow:hidden"><span class="t" style="left:0;top:0;font-size:12px;color:#000;transform-origin:0 0;transform:scaleX(0.9079)">10000</span></div>
<span class="t" style="top:630.78px;font-size:12px;color:#000;left:908.18px;transform-origin:0 0;transform:scaleX(1.0256);">Administrator</span>
<span class="t" style="top:630.78px;font-size:12px;color:#000;right:864.01px;transform-origin:100% 0;transform:scaleX(0.8374);">1</span>
<div style="left:274px;top:649px;width:1px;height:19px;background:#ededed;"></div>
<div style="left:375px;top:649px;width:1px;height:19px;background:#ededed;"></div>
<div style="left:451px;top:649px;width:1px;height:19px;background:#ededed;"></div>
<div style="left:552px;top:649px;width:1px;height:19px;background:#ededed;"></div>
<div style="left:653px;top:649px;width:1px;height:19px;background:#ededed;"></div>
<div style="left:754px;top:649px;width:1px;height:19px;background:#ededed;"></div>
<div style="left:805px;top:649px;width:1px;height:19px;background:#ededed;"></div>
<div style="left:856px;top:649px;width:1px;height:19px;background:#ededed;"></div>
<div style="left:907px;top:649px;width:1px;height:19px;background:#ededed;"></div>
<div style="left:1008px;top:649px;width:1px;height:19px;background:#ededed;"></div>
<div style="left:1059px;top:649px;width:1px;height:19px;background:#ededed;"></div>
<div style="left:224px;top:668px;width:836px;height:1px;background:#efefef;"></div>
<div style="left:211px;top:668px;width:13px;height:1px;background:#cfcfcf;"></div>
<div style="left:223px;top:649px;width:1px;height:20px;background:#cfcfcf;"></div>
<span class="t" style="top:650.78px;font-size:12px;color:#000;right:1648.65px;transform-origin:100% 0;transform:scaleX(0.9061);">187</span>
<span class="t" style="top:650.78px;font-size:12px;color:#000;left:274.86px;transform-origin:0 0;transform:scaleX(0.9571);">Edit</span>
<div style="left:379.01px;top:650.78px;width:72.99px;height:16px;overflow:hidden"><span class="t" style="left:0;top:0;font-size:12px;color:#000;transform-origin:0 0;transform:scaleX(0.9831)">28/11/2025 11:33:19 AM</span></div>
<span class="t" style="top:650.78px;font-size:12px;color:#000;left:452.36px;transform-origin:0 0;transform:scaleX(0.8941);">TPBDOSALEBOOK</span>
<span class="t" style="top:650.78px;font-size:12px;color:#000;left:552.95px;transform-origin:0 0;transform:scaleX(0.9047);">2</span>
<div style="left:653.96px;top:650.78px;width:99.94px;height:16px;overflow:hidden"><span class="t" style="left:0;top:0;font-size:12px;color:#000;transform-origin:0 0;transform:scaleX(0.9552)">purchaser_licence_number</span></div>
<div style="left:754.97px;top:650.78px;width:49.93px;height:16px;overflow:hidden"><span class="t" style="left:0;top:0;font-size:12px;color:#000;transform-origin:0 0;transform:scaleX(0.9076)">1234567</span></div>
<span class="t" style="top:650.78px;font-size:12px;color:#000;left:908.18px;transform-origin:0 0;transform:scaleX(1.0256);">Administrator</span>
<span class="t" style="top:650.78px;font-size:12px;color:#000;right:864.01px;transform-origin:100% 0;transform:scaleX(0.8374);">1</span>
<div style="left:224px;top:669px;width:836px;height:19px;background:#9ab4d3;"></div>
<div style="left:274px;top:669px;width:1px;height:19px;background:#e6edf5;"></div>
<div style="left:375px;top:669px;width:1px;height:19px;background:#e6edf5;"></div>
<div style="left:451px;top:669px;width:1px;height:19px;background:#e6edf5;"></div>
<div style="left:552px;top:669px;width:1px;height:19px;background:#e6edf5;"></div>
<div style="left:653px;top:669px;width:1px;height:19px;background:#e6edf5;"></div>
<div style="left:754px;top:669px;width:1px;height:19px;background:#e6edf5;"></div>
<div style="left:805px;top:669px;width:1px;height:19px;background:#e6edf5;"></div>
<div style="left:856px;top:669px;width:1px;height:19px;background:#e6edf5;"></div>
<div style="left:907px;top:669px;width:1px;height:19px;background:#e6edf5;"></div>
<div style="left:1008px;top:669px;width:1px;height:19px;background:#e6edf5;"></div>
<div style="left:1059px;top:669px;width:1px;height:19px;background:#e6edf5;"></div>
<div style="left:211px;top:688px;width:13px;height:1px;background:#cfcfcf;"></div>
<div style="left:223px;top:669px;width:1px;height:20px;background:#cfcfcf;"></div>
<span class="t" style="top:670.78px;font-size:12px;color:#000;right:1648.65px;transform-origin:100% 0;transform:scaleX(0.9061);">182</span>
<span class="t" style="top:670.78px;font-size:12px;color:#000;left:274.76px;transform-origin:0 0;transform:scaleX(1.0328);">Information</span>
<div style="left:379.01px;top:670.78px;width:72.99px;height:16px;overflow:hidden"><span class="t" style="left:0;top:0;font-size:12px;color:#000;transform-origin:0 0;transform:scaleX(0.9831)">28/11/2025 11:33:19 AM</span></div>
<span class="t" style="top:670.78px;font-size:12px;color:#000;left:452.36px;transform-origin:0 0;transform:scaleX(0.8941);">TPBDOSALEBOOK</span>
<span class="t" style="top:670.78px;font-size:12px;color:#000;left:552.95px;transform-origin:0 0;transform:scaleX(0.9047);">2</span>
<div style="left:856.75px;top:670.78px;width:50.15px;height:16px;overflow:hidden"><span class="t" style="left:0;top:0;font-size:12px;color:#000;transform-origin:0 0;transform:scaleX(0.9667)">Rollback of sale</span></div>
<span class="t" style="top:670.78px;font-size:12px;color:#000;left:908.18px;transform-origin:0 0;transform:scaleX(1.0256);">Administrator</span>
<span class="t" style="top:670.78px;font-size:12px;color:#000;right:864.01px;transform-origin:100% 0;transform:scaleX(0.8374);">1</span>
<div style="left:274px;top:689px;width:1px;height:19px;background:#ededed;"></div>
<div style="left:375px;top:689px;width:1px;height:19px;background:#ededed;"></div>
<div style="left:451px;top:689px;width:1px;height:19px;background:#ededed;"></div>
<div style="left:552px;top:689px;width:1px;height:19px;background:#ededed;"></div>
<div style="left:653px;top:689px;width:1px;height:19px;background:#ededed;"></div>
<div style="left:754px;top:689px;width:1px;height:19px;background:#ededed;"></div>
<div style="left:805px;top:689px;width:1px;height:19px;background:#ededed;"></div>
<div style="left:856px;top:689px;width:1px;height:19px;background:#ededed;"></div>
<div style="left:907px;top:689px;width:1px;height:19px;background:#ededed;"></div>
<div style="left:1008px;top:689px;width:1px;height:19px;background:#ededed;"></div>
<div style="left:1059px;top:689px;width:1px;height:19px;background:#ededed;"></div>
<div style="left:224px;top:708px;width:836px;height:1px;background:#efefef;"></div>
<div style="left:211px;top:708px;width:13px;height:1px;background:#cfcfcf;"></div>
<div style="left:223px;top:689px;width:1px;height:20px;background:#cfcfcf;"></div>
<span class="t" style="top:690.78px;font-size:12px;color:#000;right:1648.72px;transform-origin:100% 0;transform:scaleX(0.9061);">183</span>
<span class="t" style="top:690.78px;font-size:12px;color:#000;left:274.76px;transform-origin:0 0;transform:scaleX(1.0328);">Information</span>
<div style="left:379.01px;top:690.78px;width:72.99px;height:16px;overflow:hidden"><span class="t" style="left:0;top:0;font-size:12px;color:#000;transform-origin:0 0;transform:scaleX(0.9831)">28/11/2025 11:33:19 AM</span></div>
<span class="t" style="top:690.78px;font-size:12px;color:#000;left:452.36px;transform-origin:0 0;transform:scaleX(0.8941);">TPBDOSALEBOOK</span>
<span class="t" style="top:690.78px;font-size:12px;color:#000;left:552.95px;transform-origin:0 0;transform:scaleX(0.9047);">2</span>
<div style="left:856.81px;top:690.78px;width:50.09px;height:16px;overflow:hidden"><span class="t" style="left:0;top:0;font-size:12px;color:#000;transform-origin:0 0;transform:scaleX(0.9057)">Reason: Rollback</span></div>
<span class="t" style="top:690.78px;font-size:12px;color:#000;left:908.18px;transform-origin:0 0;transform:scaleX(1.0256);">Administrator</span>
<span class="t" style="top:690.78px;font-size:12px;color:#000;right:864.01px;transform-origin:100% 0;transform:scaleX(0.8374);">1</span>
<div style="left:224px;top:709px;width:836px;height:19px;background:#9ab4d3;"></div>
<div style="left:274px;top:709px;width:1px;height:19px;background:#e6edf5;"></div>
<div style="left:375px;top:709px;width:1px;height:19px;background:#e6edf5;"></div>
<div style="left:451px;top:709px;width:1px;height:19px;background:#e6edf5;"></div>
<div style="left:552px;top:709px;width:1px;height:19px;background:#e6edf5;"></div>
<div style="left:653px;top:709px;width:1px;height:19px;background:#e6edf5;"></div>
<div style="left:754px;top:709px;width:1px;height:19px;background:#e6edf5;"></div>
<div style="left:805px;top:709px;width:1px;height:19px;background:#e6edf5;"></div>
<div style="left:856px;top:709px;width:1px;height:19px;background:#e6edf5;"></div>
<div style="left:907px;top:709px;width:1px;height:19px;background:#e6edf5;"></div>
<div style="left:1008px;top:709px;width:1px;height:19px;background:#e6edf5;"></div>
<div style="left:1059px;top:709px;width:1px;height:19px;background:#e6edf5;"></div>
<div style="left:211px;top:728px;width:13px;height:1px;background:#cfcfcf;"></div>
<div style="left:223px;top:709px;width:1px;height:20px;background:#cfcfcf;"></div>
<span class="t" style="top:710.78px;font-size:12px;color:#000;right:1648.88px;transform-origin:100% 0;transform:scaleX(0.9061);">184</span>
<span class="t" style="top:710.78px;font-size:12px;color:#000;left:274.86px;transform-origin:0 0;transform:scaleX(0.9571);">Edit</span>
<div style="left:379.01px;top:710.78px;width:72.99px;height:16px;overflow:hidden"><span class="t" style="left:0;top:0;font-size:12px;color:#000;transform-origin:0 0;transform:scaleX(0.9831)">28/11/2025 11:33:19 AM</span></div>
<span class="t" style="top:710.78px;font-size:12px;color:#000;left:452.36px;transform-origin:0 0;transform:scaleX(0.8941);">TPBDOSALEBOOK</span>
<span class="t" style="top:710.78px;font-size:12px;color:#000;left:552.95px;transform-origin:0 0;transform:scaleX(0.9047);">2</span>
<div style="left:653.96px;top:710.78px;width:99.94px;height:16px;overflow:hidden"><span class="t" style="left:0;top:0;font-size:12px;color:#000;transform-origin:0 0;transform:scaleX(0.9546)">purchaser_family_name</span></div>
<div style="left:755.54px;top:710.78px;width:49.36px;height:16px;overflow:hidden"><span class="t" style="left:0;top:0;font-size:12px;color:#000;transform-origin:0 0;transform:scaleX(0.9539)">Test</span></div>
<span class="t" style="top:710.78px;font-size:12px;color:#000;left:908.18px;transform-origin:0 0;transform:scaleX(1.0256);">Administrator</span>
<span class="t" style="top:710.78px;font-size:12px;color:#000;right:864.01px;transform-origin:100% 0;transform:scaleX(0.8374);">1</span>
<svg style="left:214px;top:292px" width="8" height="14" viewBox="0 0 8 14"><path d="M1 1L7 7L1 13" fill="none" stroke="#222" stroke-width="1.3"/></svg>
<div style="left:1887px;top:269px;width:17px;height:470px;background:#f3f3f3;"></div>
<svg style="left:1891px;top:273px" width="8" height="7" viewBox="0 0 8 7"><path d="M0 7H8L4 0.8Z" fill="#858585"/></svg>
<svg style="left:1891px;top:727px" width="8" height="7" viewBox="0 0 8 7"><path d="M0 0H8L4 6.2Z" fill="#858585"/></svg>
<div style="left:1894px;top:286px;width:2px;height:139px;background:#858585;border-radius:1px;"></div>
<div style="left:210px;top:740px;width:1696px;height:36px;background:#f2f2f2;border:3px solid #cdcdcd;border-width:3px 2px 2px 2px;"></div>
<div style="left:215px;top:746px;width:1436px;height:25px;background:#f2f2f2;border:2px solid #cfcfcf;"></div>
<span class="t" style="top:750.53px;font-size:12px;color:#000;text-decoration:underline;text-decoration-skip-ink:none;text-underline-offset:1px;left:217.05px;transform-origin:0 0;transform:scaleX(0.9652);">Last update: 28/11/2025 11:33:19 AM </span>
<span class="t" style="top:750.53px;font-size:12px;color:#000;left:966.70px;transform-origin:0 0;transform:scaleX(0.8776);">1:48</span>
<span class="t" style="top:750.53px;font-size:12px;color:#000;left:1543.67px;transform-origin:0 0;transform:scaleX(0.9482);">Duration: 0.078  sec.</span>
<div style="left:1657px;top:746px;width:144px;height:25px;background:#fff;border:1px solid #e4e4e4;border-radius:2px;border-bottom-color:#c4c4c4;"></div>
<div style="left:1773px;top:748px;width:25px;height:20px;background:#fdfdfd;border:1px solid #bcbcbc;border-radius:4px;"></div>
<svg style="left:1780.2px;top:751.5px" width="11" height="11" viewBox="0 0 11 11"><path d="M0.5 0.5L10.5 10.5M10.5 0.5L0.5 10.5" stroke="#333" stroke-width="1.1" fill="none"/></svg>
<svg style="left:1811px;top:751px" width="15" height="15" viewBox="0 0 15 15"><path d="M1.5 1V14" stroke="#222" stroke-width="1.3"/><path d="M13.5 1.5V13.5L4 7.5Z" fill="none" stroke="#222" stroke-width="1.2"/></svg>
<svg style="left:1835px;top:751px" width="13" height="15" viewBox="0 0 13 15"><path d="M11.5 1.5V13.5L1.5 7.5Z" fill="none" stroke="#222" stroke-width="1.2"/></svg>
<svg style="left:1859px;top:751px" width="13" height="15" viewBox="0 0 13 15"><path d="M1.5 1.5V13.5L11.5 7.5Z" fill="none" stroke="#222" stroke-width="1.2"/></svg>
<svg style="left:1881px;top:751px" width="15" height="15" viewBox="0 0 15 15"><path d="M13.5 1V14" stroke="#222" stroke-width="1.3"/><path d="M1.5 1.5V13.5L11 7.5Z" fill="none" stroke="#222" stroke-width="1.2"/></svg>
<div style="left:213px;top:782px;width:1534px;height:54px;background:#f2f2f2;"></div>
<svg style="left:228px;top:786.7px" width="17" height="14" viewBox="0 0 17 14"><path d="M10.6 1.6C5.2 0.6 2.4 4.4 2.6 8.6" fill="none" stroke="#4d4d4d" stroke-width="2"/><path d="M0 8.2H5.4L2.4 12.2Z" fill="#4d4d4d"/><path d="M5.6 12.6C11 13.6 13.8 9.8 13.6 5.6" fill="none" stroke="#4d4d4d" stroke-width="2"/><path d="M10.8 6.2H16.2L13.8 2Z" fill="#4d4d4d"/></svg>
<span class="t" style="top:800.78px;font-size:12px;color:#000;left:215.30px;transform-origin:0 0;transform:scaleX(0.9160);">Refresh</span>
<div style="left:260px;top:784px;width:1px;height:34px;background:#d6d6d6;"></div>
<span class="t" style="top:787.63px;font-size:12px;color:#000;left:1762.50px;transform-origin:0 0;transform:scaleX(0.9124);">Search</span>
<div style="left:1763px;top:809px;width:134px;height:23px;background:#fff;border:1px solid #e4e4e4;border-radius:2px;border-bottom-color:#c4c4c4;"></div>
<div style="left:1871px;top:811px;width:23px;height:18px;background:#fdfdfd;border:1px solid #bcbcbc;border-radius:4px;"></div>
<svg style="left:1877.2px;top:814px" width="11" height="11" viewBox="0 0 11 11"><path d="M0.5 0.5L10.5 10.5M10.5 0.5L0.5 10.5" stroke="#333" stroke-width="1.1" fill="none"/></svg>
<div style="left:210px;top:839px;width:1696px;height:104px;background:#fff;border:1px solid #e4e4e4;border-bottom:none;border-radius:2px 2px 0 0;"></div>
<div style="left:211px;top:840px;width:394px;height:21px;background:#f7f7f7;"></div>
<div style="left:211px;top:840px;width:13px;height:41px;background:#f7f7f7;"></div>
<div style="left:211px;top:840px;width:1px;height:41px;background:#d8d8d8;"></div>
<svg style="left:213px;top:847px" width="9" height="7" viewBox="0 0 9 7"><path d="M0.5 0.5H8.5L4.5 6.5Z" fill="#000"/></svg>
<div style="left:223px;top:841px;width:1px;height:19px;background:#c8c8c8;"></div>
<span class="t" style="top:843.23px;font-size:12px;color:#000;left:225.67px;transform-origin:0 0;transform:scaleX(0.9760);">Staffid</span>
<div style="left:274px;top:841px;width:1px;height:19px;background:#cfcfcf;"></div>
<div style="left:274px;top:861px;width:1px;height:19px;background:#ededed;"></div>
<span class="t" style="top:843.23px;font-size:12px;color:#000;left:276.22px;transform-origin:0 0;transform:scaleX(0.9927);">Fullname</span>
<div style="left:375px;top:841px;width:1px;height:19px;background:#cfcfcf;"></div>
<div style="left:375px;top:861px;width:1px;height:19px;background:#ededed;"></div>
<span class="t" style="top:843.23px;font-size:12px;color:#000;left:378.18px;transform-origin:0 0;transform:scaleX(0.9992);">Audit Date</span>
<div style="left:451px;top:841px;width:1px;height:19px;background:#cfcfcf;"></div>
<div style="left:451px;top:861px;width:1px;height:19px;background:#ededed;"></div>
<span class="t" style="top:843.23px;font-size:12px;color:#000;left:453.15px;transform-origin:0 0;transform:scaleX(0.9496);">Inserts</span>
<div style="left:502px;top:841px;width:1px;height:19px;background:#cfcfcf;"></div>
<div style="left:502px;top:861px;width:1px;height:19px;background:#ededed;"></div>
<span class="t" style="top:843.23px;font-size:12px;color:#000;left:504.28px;transform-origin:0 0;transform:scaleX(0.9368);">Edits</span>
<div style="left:553px;top:841px;width:1px;height:19px;background:#cfcfcf;"></div>
<div style="left:553px;top:861px;width:1px;height:19px;background:#ededed;"></div>
<span class="t" style="top:843.23px;font-size:12px;color:#000;left:555.29px;transform-origin:0 0;transform:scaleX(0.9217);">Deletes</span>
<div style="left:604px;top:841px;width:1px;height:19px;background:#cfcfcf;"></div>
<div style="left:604px;top:861px;width:1px;height:19px;background:#ededed;"></div>
<div style="left:224px;top:880px;width:381px;height:1px;background:#efefef;"></div>
<div style="left:211px;top:880px;width:13px;height:1px;background:#cfcfcf;"></div>
<div style="left:211px;top:860px;width:13px;height:1px;background:#cfcfcf;"></div>
<div style="left:223px;top:861px;width:1px;height:20px;background:#cfcfcf;"></div>
<svg style="left:214px;top:864px" width="8" height="14" viewBox="0 0 8 14"><path d="M1 1L7 7L1 13" fill="none" stroke="#222" stroke-width="1.3"/></svg>
<span class="t" style="top:863.23px;font-size:12px;color:#000;right:1649.01px;transform-origin:100% 0;transform:scaleX(0.8374);">1</span>
<span class="t" style="top:863.23px;font-size:12px;color:#000;left:274.98px;transform-origin:0 0;transform:scaleX(1.0256);">Administrator</span>
<span class="t" style="top:863.23px;font-size:12px;color:#000;left:378.41px;transform-origin:0 0;transform:scaleX(0.9853);">28/11/2025</span>
<span class="t" style="top:863.23px;font-size:12px;color:#000;right:1420.27px;transform-origin:100% 0;transform:scaleX(0.9271);">0</span>
<span class="t" style="top:863.23px;font-size:12px;color:#000;right:1370.21px;transform-origin:100% 0;transform:scaleX(0.8374);">1</span>
<span class="t" style="top:863.23px;font-size:12px;color:#000;right:1318.27px;transform-origin:100% 0;transform:scaleX(0.9271);">0</span>
<div style="left:210px;top:943px;width:1696px;height:36px;background:#f9f9f9;border:3px solid #cdcdcd;border-width:3px 2px 2px 2px;"></div>
<div style="left:215px;top:949px;width:1436px;height:25px;background:#f9f9f9;border:2px solid #cfcfcf;"></div>
<span class="t" style="top:953.53px;font-size:12px;color:#000;text-decoration:underline;text-decoration-skip-ink:none;text-underline-offset:1px;left:217.05px;transform-origin:0 0;transform:scaleX(0.9652);">Last update: 28/11/2025 11:33:19 AM </span>
<span class="t" style="top:953.53px;font-size:12px;color:#000;left:969.21px;transform-origin:0 0;transform:scaleX(0.8689);">1:1</span>
<span class="t" style="top:953.53px;font-size:12px;color:#000;left:1543.67px;transform-origin:0 0;transform:scaleX(0.9482);">Duration: 0.000  sec.</span>
<div style="left:1657px;top:949px;width:144px;height:25px;background:#fff;border:1px solid #e4e4e4;border-radius:2px;border-bottom-color:#c4c4c4;"></div>
<div style="left:1773px;top:951px;width:25px;height:20px;background:#fdfdfd;border:1px solid #bcbcbc;border-radius:4px;"></div>
<svg style="left:1780.2px;top:954.5px" width="11" height="11" viewBox="0 0 11 11"><path d="M0.5 0.5L10.5 10.5M10.5 0.5L0.5 10.5" stroke="#333" stroke-width="1.1" fill="none"/></svg>
<div style="left:1807px;top:949px;width:94px;height:25px;background:#f2f2f2;"></div>
<svg style="left:1811px;top:954px" width="15" height="15" viewBox="0 0 15 15"><path d="M1.5 1V14" stroke="#9a9a9a" stroke-width="1.3"/><path d="M13.5 1.5V13.5L4 7.5Z" fill="none" stroke="#9a9a9a" stroke-width="1.2"/></svg>
<svg style="left:1835px;top:954px" width="13" height="15" viewBox="0 0 13 15"><path d="M11.5 1.5V13.5L1.5 7.5Z" fill="none" stroke="#9a9a9a" stroke-width="1.2"/></svg>
<svg style="left:1859px;top:954px" width="13" height="15" viewBox="0 0 13 15"><path d="M1.5 1.5V13.5L11.5 7.5Z" fill="none" stroke="#222" stroke-width="1.2"/></svg>
<svg style="left:1881px;top:954px" width="15" height="15" viewBox="0 0 15 15"><path d="M13.5 1V14" stroke="#222" stroke-width="1.3"/><path d="M1.5 1.5V13.5L11 7.5Z" fill="none" stroke="#222" stroke-width="1.2"/></svg>
<span class="t" style="top:989.93px;font-size:12px;color:#5a5a5a;left:206.95px;transform-origin:0 0;transform:scaleX(0.9133);">General</span>
<span class="t" style="top:989.93px;font-size:12px;color:#5a5a5a;left:258.42px;transform-origin:0 0;transform:scaleX(0.9983);">Documents</span>
<span class="t" style="top:989.93px;font-size:12px;color:#5a5a5a;left:331.24px;transform-origin:0 0;transform:scaleX(0.9736);">Messaging</span>
<span class="t" style="top:989.93px;font-size:12px;color:#5a5a5a;left:400.57px;transform-origin:0 0;transform:scaleX(0.9398);">Reports</span>
<span class="t" style="top:989.93px;font-size:12px;color:#5a5a5a;left:458.47px;transform-origin:0 0;transform:scaleX(0.9808);">Staff</span>
<span class="t" style="top:989.93px;font-size:12px;color:#5a5a5a;left:554.49px;transform-origin:0 0;transform:scaleX(0.9371);">System</span>
<div style="left:495px;top:986px;width:54px;height:24px;background:#f9f9f9;border:1px solid #d0d0d0;border-top:none;border-radius:0 0 4px 4px;"></div>
<span class="t" style="top:990.78px;font-size:12px;color:#000;left:500.68px;transform-origin:0 0;transform:scaleX(0.9571);">Security</span>
<span class="t" style="top:1015.78px;font-size:12px;color:#000;left:0.93px;transform-origin:0 0;transform:scaleX(1.0067);">Online - Administrator (44)</span>
<span class="t" style="top:1015.78px;font-size:12px;color:#000;left:293.92px;transform-origin:0 0;transform:scaleX(0.9107);">1.115.66.114</span>
<span class="t" style="top:1015.78px;font-size:12px;color:#000;left:433.47px;transform-origin:0 0;transform:scaleX(0.9493);">Registered: TRAINING (30/08/2052)</span>
<div style="left:130px;top:30px;width:1px;height:1px;background:#8a8a8a;"></div>
<div style="left:122px;top:59px;width:1px;height:1px;background:#8a8a8a;"></div>
<div style="left:331px;top:30px;width:1px;height:1px;background:#8a8a8a;"></div>
<div style="left:229px;top:59px;width:1px;height:1px;background:#8a8a8a;"></div>
<div style="left:243px;top:214px;width:1px;height:1px;background:#8a8a8a;"></div>
<div style="left:289px;top:214px;width:1px;height:1px;background:#8a8a8a;"></div>
<div style="left:243px;top:786px;width:1px;height:1px;background:#8a8a8a;"></div>
<div style="left:1845px;top:174px;width:1px;height:1px;background:#8a8a8a;"></div>
<div style="left:21px;top:151px;width:1px;height:1px;background:#8a8a8a;"></div>
<div style="left:21px;top:177px;width:1px;height:1px;background:#8a8a8a;"></div>
<div style="left:21px;top:203px;width:1px;height:1px;background:#8a8a8a;"></div>
<div style="left:21px;top:229px;width:1px;height:1px;background:#8a8a8a;"></div>
<div style="left:21px;top:281px;width:1px;height:1px;background:#8a8a8a;"></div>
</body></html>
